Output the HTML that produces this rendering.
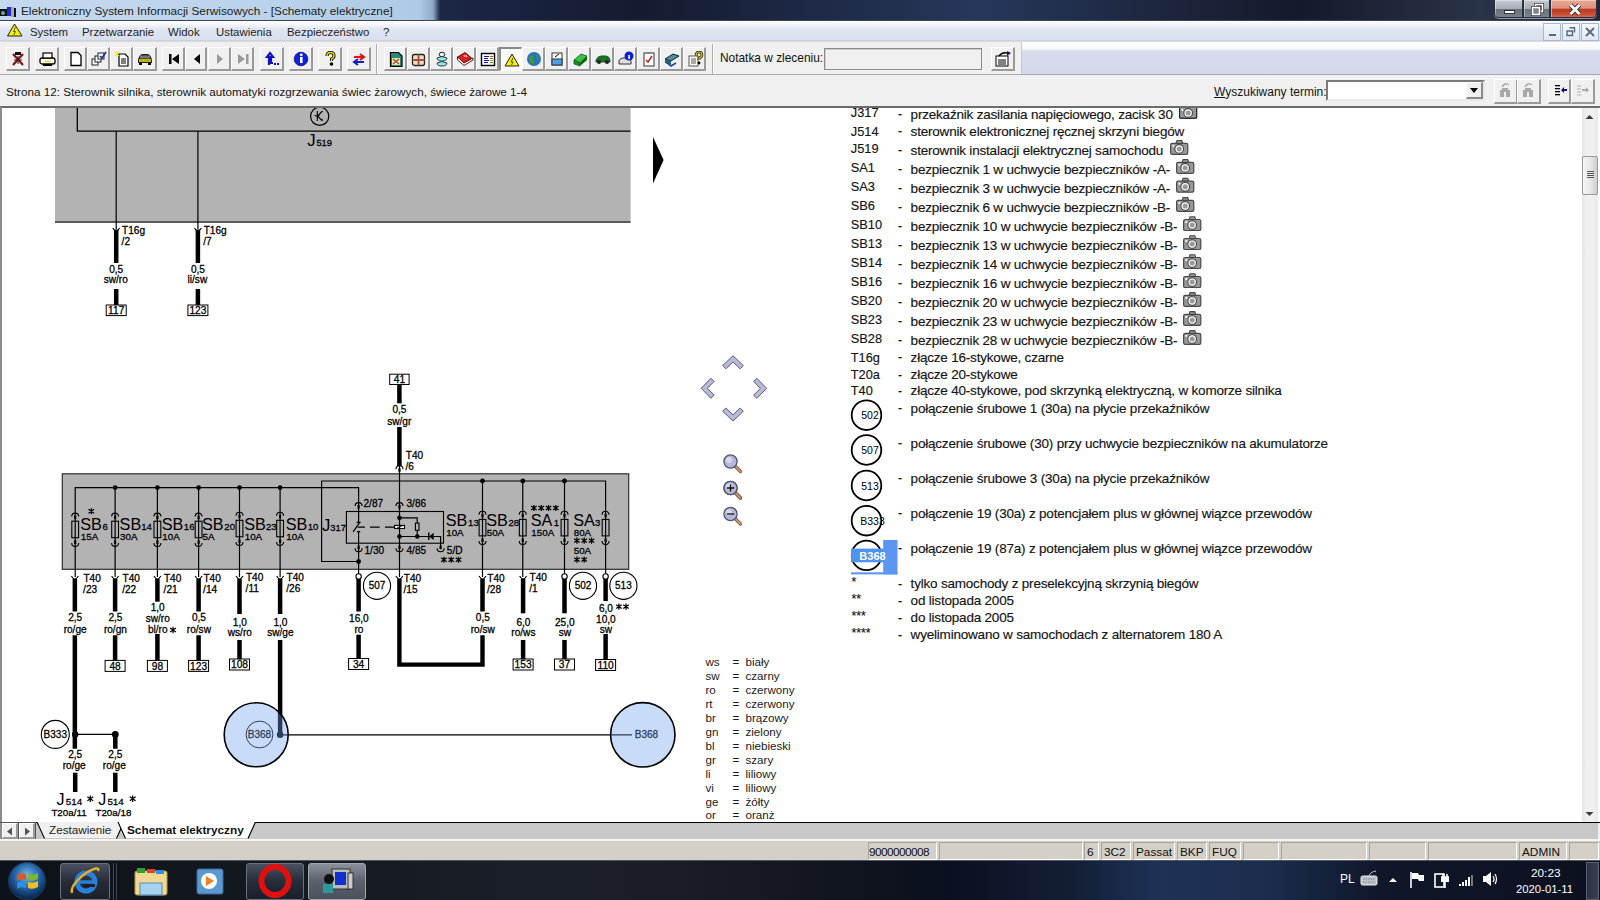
<!DOCTYPE html>
<html><head><meta charset="utf-8">
<style>
*{margin:0;padding:0;box-sizing:border-box}
html,body{width:1600px;height:900px;overflow:hidden;background:#f0f0f0;font-family:"Liberation Sans",sans-serif;font-size:12px;color:#000;position:relative}
.a{position:absolute}
#title{left:0;top:0;width:1600px;height:21px;background:linear-gradient(90deg,#c4d9ee 0,#bcd3ec 250px,#aecae6 420px,#8fa9c8 433px,#1c2746 440px,#141b31 640px,#27375a 980px,#1d2740 1150px,#131a2b 1300px,#2a3448 1480px,#1f2738 1600px);border-bottom:1px solid #3e4450}
#title .t{position:absolute;left:21px;top:4px;font-size:11.8px;color:#1c1c1c}
#menu{left:0;top:21px;width:1600px;height:21px;background:linear-gradient(#fdfdfe 0,#f3f5fa 4px,#dfe5f1 8px,#d8dfee 19px,#c0c5d0 20px,#f0f0f0 21px)}
#menu span{position:absolute;top:4.5px;font-size:11.4px;color:#1e1e1e}
.mdi{position:absolute;top:2px;width:18px;height:18px;border:1px solid #a9b8cc;background:linear-gradient(#f4f8fc,#dde8f3)}
#tb{left:0;top:42px;width:1600px;height:33px;background:#f0f0f0;border-bottom:1px solid #a9a9a9}
#tbr{left:1021px;top:42px;width:579px;height:32px;background:linear-gradient(#fefefe 0,#f6f7fb 7px,#d6dcec 9px,#d3d9ea 31px);border-left:1px solid #c8c8c8}
.btn{position:absolute;top:5px;height:24px;background:#f0f0f0;border-style:solid;border-width:1px 2px 2px 1px;border-color:#fff #9a9a9a #9a9a9a #fff}
.btn svg{position:absolute;left:0;top:0}
.sep{position:absolute;top:2px;width:2px;height:30px;border-left:1px solid #b0b0b0;border-right:1px solid #fff}
#info{left:0;top:75px;width:1600px;height:32px;background:#f0f0f0}
#info .t{position:absolute;left:6px;top:10px;font-size:11.7px;color:#141414}
#content{left:0;top:106px;width:1600px;height:717px;background:#fff;border-top:2px solid #6c6c6c;border-left:2px solid #8c8c8c;overflow:hidden}
#svgwrap{position:absolute;left:0;top:0;width:1600px;height:900px}
.lg{position:absolute;left:0;height:16px;white-space:nowrap;color:#1a1a1a}
.lg .c1{position:absolute;left:850.8px;font-size:12.4px;top:1px}
.lg .c1.st{font-size:11px;top:-2px}
.lg .c2{position:absolute;left:898px;font-size:12px;top:1px}
.lg .c3{position:absolute;left:910.5px;font-size:13px;top:0}
.cl span{position:absolute;font-size:11.6px;color:#1a1a1a;white-space:nowrap}
.cl{position:absolute;left:0}
#scroll{left:1582px;top:108px;width:16px;height:714px;background:linear-gradient(90deg,#e6e6e6,#f0f0f0 30%,#f0f0f0 70%,#e8e8e8)}
#tabs{left:0;top:822px;width:1600px;height:17px;background:#c8c8c8;border-top:1px solid #000}
#status{left:0;top:839px;width:1600px;height:21px;background:#d4d0c8;border-top:2px solid #f6f5f2}
.sp{position:absolute;top:1px;height:18px;border:1px solid;border-color:#a8a49c #fff #fff #a8a49c;font-size:11.8px;padding:1.5px 0 0 2px;color:#111;white-space:nowrap}
#task{left:0;top:860px;width:1600px;height:40px;background:linear-gradient(90deg,#0d1119 0,#151920 300px,#1b1f27 560px,#191c24 700px,#10141d 850px,#0b1020 950px,#142038 1080px,#1f3256 1160px,#1c2c4c 1270px,#0f172a 1380px,#0c111f 1600px);border-top:1px solid #4e5664}
.tbtn{position:absolute;top:2px;height:37px;border:1px solid #6a7282;border-radius:3px;background:linear-gradient(#4a5060,#262c38 50%,#1a1f2a)}
.tray{position:absolute;color:#fff;font-size:12px}
</style></head><body>
<div id="title" class="a">
 <svg class="a" style="left:0;top:5px" width="18" height="13"><rect x="0" y="4" width="7" height="7" fill="#111"/><circle cx="3" cy="8" r="2" fill="#6a8"/><rect x="7" y="2" width="4" height="9" fill="#1a2ad0"/><rect x="11" y="2" width="3" height="10" fill="#aaa"/><rect x="14" y="3" width="2" height="9" fill="#111"/></svg>
 <span class="t">Elektroniczny System Informacji Serwisowych - [Schematy elektryczne]</span>
 <div class="a" style="left:1494px;top:-1px;width:103px;height:19px;border:1px solid #2a2f3a;border-radius:0 0 5px 5px;overflow:hidden;box-shadow:0 1px 0 rgba(230,235,245,0.55)">
  <div class="a" style="left:0;top:0;width:28px;height:18px;background:linear-gradient(#c4c8d0,#a8adb6 48%,#6a717c 52%,#7d848e);border-right:1px solid #2c3240;box-shadow:inset 1px 1px 0 rgba(255,255,255,0.4)"></div>
  <div class="a" style="left:29px;top:0;width:26px;height:18px;background:linear-gradient(#c4c8d0,#a8adb6 48%,#6a717c 52%,#7d848e);border-right:1px solid #2c3240;box-shadow:inset 1px 1px 0 rgba(255,255,255,0.4)"></div>
  <div class="a" style="left:56px;top:0;width:47px;height:18px;background:linear-gradient(#eaa898,#e0907e 45%,#b83a22 52%,#c84a30 75%,#d87060);box-shadow:inset 1px 1px 0 rgba(255,220,210,0.6)"></div>
  <div class="a" style="left:9px;top:10px;width:11px;height:4px;background:#fff;border:1px solid #333"></div>
  <svg class="a" style="left:36px;top:3px" width="14" height="13"><rect x="4.5" y="1.5" width="7" height="7" fill="none" stroke="#333" stroke-width="3"/><rect x="4.5" y="1.5" width="7" height="7" fill="none" stroke="#fff" stroke-width="1.6"/><rect x="1.5" y="4.5" width="7" height="7" fill="#7c8390" stroke="#333" stroke-width="3"/><rect x="1.5" y="4.5" width="7" height="7" fill="#7c8390" stroke="#fff" stroke-width="1.6"/></svg>
  <svg class="a" style="left:72px;top:3px" width="16" height="13"><path d="M3.5 2 L12.5 11 M12.5 2 L3.5 11" stroke="#333" stroke-width="4.6"/><path d="M3.5 2 L12.5 11 M12.5 2 L3.5 11" stroke="#fff" stroke-width="2.8"/></svg>
 </div>
</div>
<div id="menu" class="a">
 <svg class="a" style="left:7px;top:2px" width="16" height="14"><path d="M7.5 1 L15 13 H0.5 Z" fill="#f5f000" stroke="#222" stroke-width="1"/><path d="M8.5 4 L6.5 8.5 H8.5 L6.8 12" stroke="#4a4a20" stroke-width="0.9" fill="none"/></svg>
 <span style="left:30px">System</span><span style="left:82px">Przetwarzanie</span><span style="left:168px">Widok</span><span style="left:216px">Ustawienia</span><span style="left:287px">Bezpieczeństwo</span><span style="left:383px">?</span>
 <div class="mdi" style="left:1543px"><div class="a" style="left:5px;top:10px;width:7px;height:2px;background:#5a6878"></div></div>
 <div class="mdi" style="left:1562px"><svg class="a" style="left:3px;top:3px" width="10" height="10"><path d="M3.5 0.8 H8.5 V5.5 M1 4 H6.5 V8.5 H1 Z" stroke="#5a6878" stroke-width="1.4" fill="none"/></svg></div>
 <div class="mdi" style="left:1581px"><svg class="a" style="left:3px;top:3px" width="11" height="11"><path d="M1 1 L9 9 M9 1 L1 9" stroke="#5a6878" stroke-width="1.8"/></svg></div>
</div>
<div id="tb" class="a"><div class="btn" style="left:6px;width:24px"><svg width="20" height="20" style="left:3px;top:3px"><path d="M3 3 L13 14 M13 3 L3 14" stroke="#8a1010" stroke-width="2.2"/><path d="M5 1 h6 v3 h-6z" fill="#111"/><path d="M4 9 h8 M8 5 v8" stroke="#222" stroke-width="1"/></svg></div>
<div class="btn" style="left:35px;width:24px"><svg width="20" height="20" style="left:3px;top:3px"><rect x="1" y="7" width="15" height="6" rx="2" fill="#fff" stroke="#000" stroke-width="1.3"/><rect x="4" y="2" width="9" height="5" fill="#fff" stroke="#000" stroke-width="1.2"/><rect x="4" y="13" width="9" height="2" fill="#000"/><rect x="6" y="10" width="4" height="1" fill="#cc0"/></svg></div>
<div class="btn" style="left:64px;width:23px"><svg width="20" height="20" style="left:3px;top:3px"><path d="M3 1.5 H10 L13 4.5 V14.5 H3 Z" fill="#fff" stroke="#000" stroke-width="1.3"/></svg></div>
<div class="btn" style="left:87px;width:23px"><svg width="20" height="20" style="left:3px;top:3px"><rect x="1" y="8" width="6" height="6" fill="#fff" stroke="#222"/><rect x="4" y="5" width="6" height="6" fill="#fff" stroke="#222"/><rect x="7" y="2" width="6" height="6" fill="#fff" stroke="#222"/><path d="M9 5 L11 7 L15 1" stroke="#1a2a9a" stroke-width="1.6" fill="none"/></svg></div>
<div class="btn" style="left:110px;width:23px"><svg width="20" height="20" style="left:3px;top:3px"><path d="M5 3 H11 L14 6 V15 H5 Z" fill="#fff" stroke="#000" stroke-width="1.2"/><path d="M7 8 H12 M7 10 H12 M7 12 H12" stroke="#000"/><path d="M1 1 L5 5 M5 1 L1 5 M3 0 V6" stroke="#ee0" stroke-width="1"/></svg></div>
<div class="btn" style="left:133px;width:24px"><svg width="20" height="20" style="left:3px;top:3px"><path d="M1 9 Q2 4 5 3 H11 Q14 4 15 9 V12 H1 Z" fill="#222"/><rect x="2" y="8" width="12" height="3" fill="#b8b400"/><rect x="3" y="4.5" width="10" height="3" fill="#777"/><rect x="2" y="12" width="3" height="2" fill="#000"/><rect x="11" y="12" width="3" height="2" fill="#000"/></svg></div>
<div class="btn" style="left:162px;width:23px"><svg width="20" height="20" style="left:3px;top:3px"><rect x="3" y="3" width="2.5" height="10" fill="#000"/><path d="M13 3 V13 L6 8 Z" fill="#000"/></svg></div>
<div class="btn" style="left:185px;width:22px"><svg width="20" height="20" style="left:3px;top:3px"><path d="M11 3 V13 L5 8 Z" fill="#000"/></svg></div>
<div class="btn" style="left:208px;width:23px"><svg width="20" height="20" style="left:3px;top:3px"><path d="M5 3 V13 L11 8 Z" fill="#9a9a9a"/></svg></div>
<div class="btn" style="left:231px;width:23px"><svg width="20" height="20" style="left:3px;top:3px"><path d="M3 3 V13 L10 8 Z" fill="#9a9a9a"/><rect x="11" y="3" width="2.5" height="10" fill="#9a9a9a"/></svg></div>
<div class="btn" style="left:260px;width:24px"><svg width="20" height="20" style="left:3px;top:3px"><path d="M5 14 V6 H3 L6 2 L9 6 H7 V12 H9" fill="none" stroke="#1010c0" stroke-width="2.2"/><rect x="10" y="12" width="2" height="2" fill="#1010c0"/><rect x="13" y="12" width="2" height="2" fill="#1010c0"/></svg></div>
<div class="btn" style="left:289px;width:24px"><svg width="20" height="20" style="left:3px;top:3px"><circle cx="8" cy="8" r="6.8" fill="#1020d8" stroke="#0a0a80" stroke-width="0.8"/><rect x="7" y="6" width="2.6" height="6" fill="#fff"/><circle cx="8.3" cy="3.8" r="1.4" fill="#fff"/></svg></div>
<div class="btn" style="left:318px;width:24px"><svg width="20" height="20" style="left:3px;top:3px"><path d="M5 5 Q5 1.5 8.5 1.5 Q12 1.5 12 5 Q12 7 9.5 8 V10" fill="none" stroke="#000" stroke-width="3"/><path d="M5 5 Q5 1.5 8.5 1.5 Q12 1.5 12 5 Q12 7 9.5 8 V10" fill="none" stroke="#f0e000" stroke-width="1.4"/><circle cx="9.5" cy="13" r="1.8" fill="#000"/></svg></div>
<div class="btn" style="left:347px;width:24px"><svg width="20" height="20" style="left:3px;top:3px"><path d="M3 6 H12 M9 3 L13 6 L9 9" stroke="#e01010" stroke-width="2" fill="none"/><path d="M13 11 H4 M7 8 L3 11 L7 14" stroke="#1020c0" stroke-width="2" fill="none"/></svg></div>
<div class="sep" style="left:376px"></div>
<div class="btn" style="left:384px;width:23px"><svg width="20" height="20" style="left:3px;top:3px"><path d="M2.5 1.5 H10.5 L14 5 V15.5 H2.5 Z" fill="#2a8a7a" stroke="#000" stroke-width="1.2"/><rect x="4" y="7" width="8" height="7" fill="#f0f080"/><path d="M5 8 L11 13 M11 8 L5 13" stroke="#a04a7a" stroke-width="1.5"/></svg></div>
<div class="btn" style="left:407px;width:23px"><svg width="20" height="20" style="left:3px;top:3px"><rect x="1.5" y="3.5" width="12" height="11" rx="2" fill="#f0e890" stroke="#222" stroke-width="1.3"/><path d="M7.5 3.5 V14.5 M1.5 9 H13.5" stroke="#a04a7a" stroke-width="1.8"/></svg></div>
<div class="btn" style="left:430px;width:23px"><svg width="20" height="20" style="left:3px;top:3px"><ellipse cx="8" cy="3.5" rx="2.8" ry="2.3" fill="#eee" stroke="#222"/><path d="M3 7 Q8 4 13 7 Q13 10 8 10 Q3 10 3 7Z" fill="#8de8f0" stroke="#222" stroke-width="0.9"/><path d="M3 12 Q8 9 13 12 Q13 15 8 15 Q3 15 3 12Z" fill="#8de8f0" stroke="#222" stroke-width="0.9"/></svg></div>
<div class="btn" style="left:453px;width:23px"><svg width="20" height="20" style="left:3px;top:3px"><path d="M0.5 6 L8 1.5 L14.5 7 L7 12 Z" fill="#e02020" stroke="#500" stroke-width="0.9"/><path d="M0.5 6 V9 L7 14.5 L16 9 V7 L7 12 Z" fill="#fff" stroke="#500" stroke-width="0.9"/><path d="M7 4 L8 6 M9 4 L10 6" stroke="#fff" stroke-width="0.9"/></svg></div>
<div class="btn" style="left:476px;width:23px"><svg width="20" height="20" style="left:3px;top:3px"><rect x="1.5" y="2.5" width="13" height="12" fill="#fff" stroke="#000" stroke-width="1.4"/><path d="M4 5.5 H9 M4 7.5 H8 M4 9.5 H9 M4 11.5 H8" stroke="#1a1aa0" stroke-width="1"/><path d="M10 5.5 H13" stroke="#e04040"/><path d="M10 7.5 H13" stroke="#40a040"/><path d="M10 9.5 H13" stroke="#c0a020"/><path d="M10 11.5 H13" stroke="#40a040"/></svg></div>
<div class="btn" style="left:499px;width:23px;background:#fafafa;border-width:2px 1px 1px 2px;border-color:#8a8a8a #fff #fff #8a8a8a"><svg width="20" height="20" style="left:3px;top:3px"><path d="M8 2 L15 14 H1 Z" fill="#f5f000" stroke="#222" stroke-width="1"/><path d="M9 6 L7 10 H9 L7.5 13" stroke="#333" stroke-width="0.9" fill="none"/></svg></div>
<div class="btn" style="left:522px;width:23px"><svg width="20" height="20" style="left:3px;top:3px"><circle cx="8" cy="8" r="7" fill="#2a70c0"/><path d="M4 5 Q7 3 8 6 Q6 9 9 11 L7 14 Q3 12 3 8Z" fill="#3a9a40"/><path d="M10 3 Q13 5 13 8 L11 9Z" fill="#3a9a40"/></svg></div>
<div class="btn" style="left:545px;width:23px"><svg width="20" height="20" style="left:3px;top:3px"><rect x="3" y="2" width="10" height="12" fill="#fff" stroke="#333"/><rect x="3" y="8" width="10" height="6" fill="#4aa0e8" stroke="#333"/><path d="M6 6 L10 3" stroke="#000"/></svg></div>
<div class="btn" style="left:568px;width:23px"><svg width="20" height="20" style="left:3px;top:3px"><path d="M2 9 L9 3 L15 5 L8 12 Z" fill="#40c040" stroke="#063" stroke-width="0.8"/><path d="M2 9 V13 L8 15 V12 Z" fill="#208a20" stroke="#063" stroke-width="0.8"/><path d="M8 12 V15 L15 9 V5Z" fill="#106010"/></svg></div>
<div class="btn" style="left:591px;width:23px"><svg width="20" height="20" style="left:3px;top:3px"><path d="M1 9 Q3 5 6 5 H11 Q14 5 15 9 V11 H1 Z" fill="#207020" stroke="#063"/><circle cx="4" cy="11" r="2" fill="#222"/><circle cx="12" cy="11" r="2" fill="#222"/></svg></div>
<div class="btn" style="left:614px;width:23px"><svg width="20" height="20" style="left:3px;top:3px"><path d="M1 10 Q2 7 5 7 H9 Q12 7 13 10 V13 H1 Z" fill="#ddd" stroke="#333"/><circle cx="11" cy="5" r="4.5" fill="#1020d0"/><rect x="10.3" y="4" width="1.6" height="4" fill="#fff"/></svg></div>
<div class="btn" style="left:637px;width:23px"><svg width="20" height="20" style="left:3px;top:3px"><rect x="3" y="2" width="10" height="13" fill="#fff" stroke="#333"/><rect x="6" y="1" width="4" height="2" fill="#888"/><path d="M5 9 L7 11 L11 5" stroke="#c02020" stroke-width="1.5" fill="none"/></svg></div>
<div class="btn" style="left:660px;width:23px"><svg width="20" height="20" style="left:3px;top:3px"><path d="M1 8 L9 3 L15 5 L7 10 Z" fill="#4a90a0" stroke="#123"/><path d="M1 8 V12 L7 14 V10Z" fill="#2a6070"/><path d="M3 12 L7 15 L12 12" stroke="#2040a0" stroke-width="1.5" fill="none"/></svg></div>
<div class="btn" style="left:683px;width:23px"><svg width="20" height="20" style="left:3px;top:3px"><rect x="2" y="5" width="9" height="10" fill="#fff" stroke="#555"/><path d="M4 8 H9 M4 10 H9 M4 12 H9" stroke="#555"/><path d="M9 5 Q9 1 12 1 Q15 1 15 4 Q15 6 12 7 V9" fill="none" stroke="#000" stroke-width="2.6"/><path d="M9 5 Q9 1 12 1 Q15 1 15 4 Q15 6 12 7 V9" fill="none" stroke="#f0e000" stroke-width="1.2"/><circle cx="12" cy="12" r="1.4" fill="#000"/></svg></div>
<div class="sep" style="left:712px"></div>
<span class="a" style="left:720px;top:9px;font-size:11.9px;color:#111">Notatka w zleceniu:</span>
<div class="a" style="left:824px;top:6px;width:158px;height:22px;background:#f0f0f0;border:1px solid #8a8a8a;box-shadow:inset 1px 1px 0 #cfcfcf"></div>
<div class="btn" style="left:991px;width:24px;top:5px"><svg width="20" height="20" style="left:2px;top:2px"><rect x="2" y="6" width="12" height="10" fill="#fff" stroke="#000"/><path d="M4 10 H12 M4 12 H12 M4 14 H12" stroke="#000"/><path d="M5 6 Q8 2 13 3" stroke="#000" stroke-width="1.5" fill="none"/><path d="M13 1 L17 3 L13 6 Z" fill="#10107a"/></svg></div></div>
<div id="tbr" class="a"></div>
<div id="info" class="a">
 <span class="t">Strona 12: Sterownik silnika, sterownik automatyki rozgrzewania świec żarowych, świece żarowe 1-4</span>
 <span class="a" style="left:1214px;top:9.5px;font-size:12px;color:#141414"><u>W</u>yszukiwany termin:</span>
 <div class="a" style="left:1326px;top:4.5px;width:159px;height:21px;background:#fff;border:2px solid;border-color:#7a7a7a #e8e8e8 #e8e8e8 #7a7a7a">
  <div class="a" style="right:0;top:0;width:17px;height:17px;background:#f0f0f0;border-style:solid;border-width:1px 2px 2px 1px;border-color:#fff #8a8a8a #8a8a8a #fff"><svg class="a" style="left:3px;top:5px" width="9" height="6"><path d="M0 0 H8 L4 5 Z" fill="#000"/></svg></div>
 </div>
 <div class="btn" style="left:1494px;top:4px;width:24px;height:25px"><svg width="20" height="20" style="left:2px;top:2px"><rect x="3" y="8" width="4" height="7" fill="#a8a8a8"/><rect x="9" y="8" width="4" height="7" fill="#a8a8a8"/><rect x="5" y="6" width="6" height="4" fill="#a8a8a8"/><path d="M5 5 Q8 0 12 3" stroke="#a8a8a8" stroke-width="1.4" fill="none"/></svg></div>
<div class="btn" style="left:1517px;top:4px;width:24px;height:25px"><svg width="20" height="20" style="left:2px;top:2px"><rect x="3" y="8" width="4" height="7" fill="#a8a8a8"/><rect x="9" y="8" width="4" height="7" fill="#a8a8a8"/><rect x="5" y="6" width="6" height="4" fill="#a8a8a8"/><path d="M5 5 Q8 0 12 3" stroke="#a8a8a8" stroke-width="1.4" fill="none"/></svg></div>
<div class="btn" style="left:1548px;top:4px;width:23px;height:25px"><svg width="20" height="20" style="left:2px;top:2px"><rect x="4" y="3" width="5" height="1.3" fill="#000"/><rect x="4" y="6" width="5" height="1.3" fill="#000"/><rect x="4" y="9" width="5" height="1.3" fill="#000"/><rect x="4" y="12" width="5" height="1.3" fill="#000"/><path d="M10 8 L13 5 V7 H16 V9 H13 V11 Z" fill="#0a0a8a"/></svg></div>
<div class="btn" style="left:1571px;top:4px;width:24px;height:25px"><svg width="20" height="20" style="left:2px;top:2px"><path d="M3 4 H7 M3 7 H7 M3 10 H7 M3 13 H7" stroke="#b0b0b0"/><path d="M15 8 L12 5 V7 H8 V9 H12 V11 Z" fill="#a8a8a8"/></svg></div>
</div>
<div id="content" class="a"></div>
<svg class="a" style="left:0;top:0;clip-path:inset(108px 18px 78px 1px);font-family:'Liberation Sans',sans-serif" width="1600" height="900">
<rect x="55" y="107" width="575.6" height="114.5" fill="#b3b3b3"/>
<line x1="55" y1="222" x2="630.6" y2="222" stroke="#5a5a5a" stroke-width="2"/>
<path d="M77.3 107 V131.2 H630.6" fill="none" stroke="#000" stroke-width="1.3"/>
<line x1="116.2" y1="131.2" x2="116.2" y2="229" stroke="#000" stroke-width="1.2"/>
<line x1="197.9" y1="131.2" x2="197.9" y2="229" stroke="#000" stroke-width="1.2"/>
<circle cx="319.7" cy="116.3" r="9.1" fill="none" stroke="#000" stroke-width="1.2"/>
<path d="M314.5 115.8 H319.5 M317.3 111 V121 M317.3 116.3 L322.5 111 M317.3 116 L321.8 120.2" fill="none" stroke="#000" stroke-width="1.1"/>
<path d="M323.2 121 L320.6 120.3 L322.2 118.6 Z" fill="#000"/>
<text x="307.2" y="146.2" font-size="16.8" text-anchor="start" fill="#000" stroke="#000" stroke-width="0.05" font-weight="normal">J</text>
<text x="316.4" y="146.3" font-size="9.4" text-anchor="start" fill="#000" stroke="#000" stroke-width="0.28" font-weight="normal">519</text>
<path d="M653 137 L663.6 160 L653 183.5 Z" fill="#000"/>
<path d="M112.7 228 Q116.2 234 119.7 228" fill="none" stroke="#000" stroke-width="1.1"/>
<rect x="113.95" y="229.5" width="4.5" height="33.5" fill="#000"/>
<text x="122" y="234.3" font-size="10.1" text-anchor="start" fill="#000" stroke="#000" stroke-width="0.28" font-weight="normal">T16g</text>
<text x="121.6" y="245" font-size="10.1" text-anchor="start" fill="#000" stroke="#000" stroke-width="0.28" font-weight="normal">/2</text>
<text x="116.2" y="272.8" font-size="10.1" text-anchor="middle" fill="#000" stroke="#000" stroke-width="0.28" font-weight="normal">0,5</text>
<text x="115.7" y="282.8" font-size="10.1" text-anchor="middle" fill="#000" stroke="#000" stroke-width="0.28" font-weight="normal">sw/ro</text>
<rect x="113.95" y="289" width="4.5" height="16.5" fill="#000"/>
<rect x="106.2" y="305" width="20" height="10.6" fill="#fff" stroke="#000" stroke-width="1"/>
<text x="116.2" y="313.9" font-size="10.2" text-anchor="middle" fill="#000" stroke="#000" stroke-width="0.28" font-weight="normal">117</text>
<path d="M194.4 228 Q197.9 234 201.4 228" fill="none" stroke="#000" stroke-width="1.1"/>
<rect x="195.65" y="229.5" width="4.5" height="33.5" fill="#000"/>
<text x="203.7" y="234.3" font-size="10.1" text-anchor="start" fill="#000" stroke="#000" stroke-width="0.28" font-weight="normal">T16g</text>
<text x="203.3" y="245" font-size="10.1" text-anchor="start" fill="#000" stroke="#000" stroke-width="0.28" font-weight="normal">/7</text>
<text x="197.9" y="272.8" font-size="10.1" text-anchor="middle" fill="#000" stroke="#000" stroke-width="0.28" font-weight="normal">0,5</text>
<text x="197.4" y="282.8" font-size="10.1" text-anchor="middle" fill="#000" stroke="#000" stroke-width="0.28" font-weight="normal">li/sw</text>
<rect x="195.65" y="289" width="4.5" height="16.5" fill="#000"/>
<rect x="187.9" y="305" width="20" height="10.6" fill="#fff" stroke="#000" stroke-width="1"/>
<text x="197.9" y="313.9" font-size="10.2" text-anchor="middle" fill="#000" stroke="#000" stroke-width="0.28" font-weight="normal">123</text>
<rect x="62.3" y="473.8" width="566.4" height="95.5" fill="#b3b3b3" stroke="#2e2e2e" stroke-width="1.2"/>
<path d="M75.2 577 V487.6 H358.6 V522" fill="none" stroke="#000" stroke-width="1.2"/>
<path d="M358.6 561.5 H321.6 V481 H605.6 V577" fill="none" stroke="#000" stroke-width="1.2"/>
<line x1="115.1" y1="487.6" x2="115.1" y2="577" stroke="#000" stroke-width="1.2"/>
<circle cx="115.1" cy="487.6" r="2.4" fill="#000"/>
<line x1="157.4" y1="487.6" x2="157.4" y2="577" stroke="#000" stroke-width="1.2"/>
<circle cx="157.4" cy="487.6" r="2.4" fill="#000"/>
<line x1="198.6" y1="487.6" x2="198.6" y2="577" stroke="#000" stroke-width="1.2"/>
<circle cx="198.6" cy="487.6" r="2.4" fill="#000"/>
<line x1="239.5" y1="487.6" x2="239.5" y2="577" stroke="#000" stroke-width="1.2"/>
<circle cx="239.5" cy="487.6" r="2.4" fill="#000"/>
<line x1="280.1" y1="487.6" x2="280.1" y2="577" stroke="#000" stroke-width="1.2"/>
<circle cx="280.1" cy="487.6" r="2.4" fill="#000"/>
<line x1="482.5" y1="481" x2="482.5" y2="577" stroke="#000" stroke-width="1.2"/>
<circle cx="482.5" cy="481" r="2.4" fill="#000"/>
<line x1="522.75" y1="481" x2="522.75" y2="577" stroke="#000" stroke-width="1.2"/>
<circle cx="522.75" cy="481" r="2.4" fill="#000"/>
<line x1="564.5" y1="481" x2="564.5" y2="577" stroke="#000" stroke-width="1.2"/>
<circle cx="564.5" cy="481" r="2.4" fill="#000"/>
<rect x="71.8" y="521.2" width="6.8" height="16.5" fill="none" stroke="#000" stroke-width="1.1"/>
<path d="M71.7 516.6 A3.5 3.5 0 0 1 78.7 516.6" fill="none" stroke="#000" stroke-width="1.1"/>
<rect x="74.1" y="515.6" width="2.2" height="3.5" fill="#000"/>
<path d="M71.7 542.9 A3.5 3.5 0 0 0 78.7 542.9" fill="none" stroke="#000" stroke-width="1.1"/>
<rect x="74.1" y="540.4" width="2.2" height="3.5" fill="#000"/>
<text x="80.3" y="529.8" font-size="16.2" text-anchor="start" fill="#000" stroke="#000" stroke-width="0.05" font-weight="normal">SB</text>
<text x="102.6" y="529.8" font-size="9.6" text-anchor="start" fill="#000" stroke="#000" stroke-width="0.28" font-weight="normal">6</text>
<text x="80.8" y="539.8" font-size="9.8" text-anchor="start" fill="#000" stroke="#000" stroke-width="0.28" font-weight="normal">15A</text>
<rect x="111.7" y="521.2" width="6.8" height="16.5" fill="none" stroke="#000" stroke-width="1.1"/>
<path d="M111.6 516.6 A3.5 3.5 0 0 1 118.6 516.6" fill="none" stroke="#000" stroke-width="1.1"/>
<rect x="114" y="515.6" width="2.2" height="3.5" fill="#000"/>
<path d="M111.6 542.9 A3.5 3.5 0 0 0 118.6 542.9" fill="none" stroke="#000" stroke-width="1.1"/>
<rect x="114" y="540.4" width="2.2" height="3.5" fill="#000"/>
<text x="119.6" y="529.8" font-size="16.2" text-anchor="start" fill="#000" stroke="#000" stroke-width="0.05" font-weight="normal">SB</text>
<text x="141.2" y="529.8" font-size="9.6" text-anchor="start" fill="#000" stroke="#000" stroke-width="0.28" font-weight="normal">14</text>
<text x="120.1" y="539.8" font-size="9.8" text-anchor="start" fill="#000" stroke="#000" stroke-width="0.28" font-weight="normal">30A</text>
<rect x="154" y="521.2" width="6.8" height="16.5" fill="none" stroke="#000" stroke-width="1.1"/>
<path d="M153.9 516.6 A3.5 3.5 0 0 1 160.9 516.6" fill="none" stroke="#000" stroke-width="1.1"/>
<rect x="156.3" y="515.6" width="2.2" height="3.5" fill="#000"/>
<path d="M153.9 542.9 A3.5 3.5 0 0 0 160.9 542.9" fill="none" stroke="#000" stroke-width="1.1"/>
<rect x="156.3" y="540.4" width="2.2" height="3.5" fill="#000"/>
<text x="161.8" y="529.8" font-size="16.2" text-anchor="start" fill="#000" stroke="#000" stroke-width="0.05" font-weight="normal">SB</text>
<text x="183.8" y="529.8" font-size="9.6" text-anchor="start" fill="#000" stroke="#000" stroke-width="0.28" font-weight="normal">16</text>
<text x="162.3" y="539.8" font-size="9.8" text-anchor="start" fill="#000" stroke="#000" stroke-width="0.28" font-weight="normal">10A</text>
<rect x="195.2" y="521.2" width="6.8" height="16.5" fill="none" stroke="#000" stroke-width="1.1"/>
<path d="M195.1 516.6 A3.5 3.5 0 0 1 202.1 516.6" fill="none" stroke="#000" stroke-width="1.1"/>
<rect x="197.5" y="515.6" width="2.2" height="3.5" fill="#000"/>
<path d="M195.1 542.9 A3.5 3.5 0 0 0 202.1 542.9" fill="none" stroke="#000" stroke-width="1.1"/>
<rect x="197.5" y="540.4" width="2.2" height="3.5" fill="#000"/>
<text x="202" y="529.8" font-size="16.2" text-anchor="start" fill="#000" stroke="#000" stroke-width="0.05" font-weight="normal">SB</text>
<text x="224.3" y="529.8" font-size="9.6" text-anchor="start" fill="#000" stroke="#000" stroke-width="0.28" font-weight="normal">20</text>
<text x="202.5" y="539.8" font-size="9.8" text-anchor="start" fill="#000" stroke="#000" stroke-width="0.28" font-weight="normal">5A</text>
<rect x="236.1" y="520.3" width="6.8" height="16.5" fill="none" stroke="#000" stroke-width="1.1"/>
<path d="M236 515.7 A3.5 3.5 0 0 1 243 515.7" fill="none" stroke="#000" stroke-width="1.1"/>
<rect x="238.4" y="514.7" width="2.2" height="3.5" fill="#000"/>
<path d="M236 542 A3.5 3.5 0 0 0 243 542" fill="none" stroke="#000" stroke-width="1.1"/>
<rect x="238.4" y="539.5" width="2.2" height="3.5" fill="#000"/>
<text x="244.2" y="529.8" font-size="16.2" text-anchor="start" fill="#000" stroke="#000" stroke-width="0.05" font-weight="normal">SB</text>
<text x="265.9" y="529.8" font-size="9.6" text-anchor="start" fill="#000" stroke="#000" stroke-width="0.28" font-weight="normal">23</text>
<text x="244.7" y="539.8" font-size="9.8" text-anchor="start" fill="#000" stroke="#000" stroke-width="0.28" font-weight="normal">10A</text>
<rect x="276.7" y="520.3" width="6.8" height="16.5" fill="none" stroke="#000" stroke-width="1.1"/>
<path d="M276.6 515.7 A3.5 3.5 0 0 1 283.6 515.7" fill="none" stroke="#000" stroke-width="1.1"/>
<rect x="279" y="514.7" width="2.2" height="3.5" fill="#000"/>
<path d="M276.6 542 A3.5 3.5 0 0 0 283.6 542" fill="none" stroke="#000" stroke-width="1.1"/>
<rect x="279" y="539.5" width="2.2" height="3.5" fill="#000"/>
<text x="285.8" y="529.8" font-size="16.2" text-anchor="start" fill="#000" stroke="#000" stroke-width="0.05" font-weight="normal">SB</text>
<text x="307.7" y="529.8" font-size="9.6" text-anchor="start" fill="#000" stroke="#000" stroke-width="0.28" font-weight="normal">10</text>
<text x="286.3" y="539.8" font-size="9.8" text-anchor="start" fill="#000" stroke="#000" stroke-width="0.28" font-weight="normal">10A</text>
<path d="M91.3 508.24 V514.36 M88.55 509.36 L94.05 513.24 M88.55 513.24 L94.05 509.36" stroke="#000" stroke-width="1.25" fill="none"/>
<text x="322" y="531.4" font-size="16.7" text-anchor="start" fill="#000" stroke="#000" stroke-width="0.05" font-weight="normal">J</text>
<text x="330.3" y="530.6" font-size="9.4" text-anchor="start" fill="#000" stroke="#000" stroke-width="0.28" font-weight="normal">317</text>
<rect x="479.1" y="519.4" width="6.8" height="16.5" fill="none" stroke="#000" stroke-width="1.1"/>
<path d="M479 514.8 A3.5 3.5 0 0 1 486 514.8" fill="none" stroke="#000" stroke-width="1.1"/>
<rect x="481.4" y="513.8" width="2.2" height="3.5" fill="#000"/>
<path d="M479 541.1 A3.5 3.5 0 0 0 486 541.1" fill="none" stroke="#000" stroke-width="1.1"/>
<rect x="481.4" y="538.6" width="2.2" height="3.5" fill="#000"/>
<text x="445.7" y="525.9" font-size="16.2" text-anchor="start" fill="#000" stroke="#000" stroke-width="0.05" font-weight="normal">SB</text>
<text x="468.1" y="525.9" font-size="9.6" text-anchor="start" fill="#000" stroke="#000" stroke-width="0.28" font-weight="normal">13</text>
<text x="446.2" y="535.9" font-size="9.8" text-anchor="start" fill="#000" stroke="#000" stroke-width="0.28" font-weight="normal">10A</text>
<rect x="519.35" y="519.4" width="6.8" height="16.5" fill="none" stroke="#000" stroke-width="1.1"/>
<path d="M519.25 514.8 A3.5 3.5 0 0 1 526.25 514.8" fill="none" stroke="#000" stroke-width="1.1"/>
<rect x="521.65" y="513.8" width="2.2" height="3.5" fill="#000"/>
<path d="M519.25 541.1 A3.5 3.5 0 0 0 526.25 541.1" fill="none" stroke="#000" stroke-width="1.1"/>
<rect x="521.65" y="538.6" width="2.2" height="3.5" fill="#000"/>
<text x="486.2" y="525.9" font-size="16.2" text-anchor="start" fill="#000" stroke="#000" stroke-width="0.05" font-weight="normal">SB</text>
<text x="508.5" y="525.9" font-size="9.6" text-anchor="start" fill="#000" stroke="#000" stroke-width="0.28" font-weight="normal">28</text>
<text x="486.7" y="535.9" font-size="9.8" text-anchor="start" fill="#000" stroke="#000" stroke-width="0.28" font-weight="normal">50A</text>
<rect x="561.1" y="519.4" width="6.8" height="16.5" fill="none" stroke="#000" stroke-width="1.1"/>
<path d="M561 514.8 A3.5 3.5 0 0 1 568 514.8" fill="none" stroke="#000" stroke-width="1.1"/>
<rect x="563.4" y="513.8" width="2.2" height="3.5" fill="#000"/>
<path d="M561 541.1 A3.5 3.5 0 0 0 568 541.1" fill="none" stroke="#000" stroke-width="1.1"/>
<rect x="563.4" y="538.6" width="2.2" height="3.5" fill="#000"/>
<text x="530.8" y="525.9" font-size="16.2" text-anchor="start" fill="#000" stroke="#000" stroke-width="0.05" font-weight="normal">SA</text>
<text x="553.8" y="525.9" font-size="9.6" text-anchor="start" fill="#000" stroke="#000" stroke-width="0.28" font-weight="normal">1</text>
<text x="531.3" y="535.9" font-size="9.8" text-anchor="start" fill="#000" stroke="#000" stroke-width="0.28" font-weight="normal">150A</text>
<rect x="602.2" y="519.4" width="6.8" height="16.5" fill="none" stroke="#000" stroke-width="1.1"/>
<path d="M602.1 514.8 A3.5 3.5 0 0 1 609.1 514.8" fill="none" stroke="#000" stroke-width="1.1"/>
<rect x="604.5" y="513.8" width="2.2" height="3.5" fill="#000"/>
<path d="M602.1 541.1 A3.5 3.5 0 0 0 609.1 541.1" fill="none" stroke="#000" stroke-width="1.1"/>
<rect x="604.5" y="538.6" width="2.2" height="3.5" fill="#000"/>
<text x="573.2" y="525.9" font-size="16.2" text-anchor="start" fill="#000" stroke="#000" stroke-width="0.05" font-weight="normal">SA</text>
<text x="594.9" y="525.9" font-size="9.6" text-anchor="start" fill="#000" stroke="#000" stroke-width="0.28" font-weight="normal">3</text>
<text x="573.7" y="535.9" font-size="9.8" text-anchor="start" fill="#000" stroke="#000" stroke-width="0.28" font-weight="normal">80A</text>
<path d="M533.9 504.94 V511.06 M531.15 506.06 L536.65 509.94 M531.15 509.94 L536.65 506.06" stroke="#000" stroke-width="1.25" fill="none"/>
<path d="M541.2 504.94 V511.06 M538.45 506.06 L543.95 509.94 M538.45 509.94 L543.95 506.06" stroke="#000" stroke-width="1.25" fill="none"/>
<path d="M548.5 504.94 V511.06 M545.75 506.06 L551.25 509.94 M545.75 509.94 L551.25 506.06" stroke="#000" stroke-width="1.25" fill="none"/>
<path d="M555.8 504.94 V511.06 M553.05 506.06 L558.55 509.94 M553.05 509.94 L558.55 506.06" stroke="#000" stroke-width="1.25" fill="none"/>
<path d="M576.9 537.54 V543.66 M574.15 538.66 L579.65 542.54 M574.15 542.54 L579.65 538.66" stroke="#000" stroke-width="1.25" fill="none"/>
<path d="M584.2 537.54 V543.66 M581.45 538.66 L586.95 542.54 M581.45 542.54 L586.95 538.66" stroke="#000" stroke-width="1.25" fill="none"/>
<path d="M591.5 537.54 V543.66 M588.75 538.66 L594.25 542.54 M588.75 542.54 L594.25 538.66" stroke="#000" stroke-width="1.25" fill="none"/>
<text x="573.7" y="554" font-size="9.8" text-anchor="start" fill="#000" stroke="#000" stroke-width="0.28" font-weight="normal">50A</text>
<path d="M576.9 556.54 V562.66 M574.15 557.66 L579.65 561.54 M574.15 561.54 L579.65 557.66" stroke="#000" stroke-width="1.25" fill="none"/>
<path d="M584.2 556.54 V562.66 M581.45 557.66 L586.95 561.54 M581.45 561.54 L586.95 557.66" stroke="#000" stroke-width="1.25" fill="none"/>
<rect x="346.4" y="511.5" width="97.1" height="31.7" fill="none" stroke="#000" stroke-width="1.1"/>
<line x1="358.6" y1="531" x2="358.6" y2="577" stroke="#000" stroke-width="1.2"/>
<path d="M355.1 506.1 A3.5 3.5 0 0 1 362.1 506.1" fill="none" stroke="#000" stroke-width="1.1"/>
<rect x="357.5" y="505.1" width="2.2" height="3.5" fill="#000"/>
<path d="M355.1 548.2 A3.5 3.5 0 0 0 362.1 548.2" fill="none" stroke="#000" stroke-width="1.1"/>
<rect x="357.5" y="545.7" width="2.2" height="3.5" fill="#000"/>
<text x="363.5" y="507.3" font-size="10.1" text-anchor="start" fill="#000" stroke="#000" stroke-width="0.28" font-weight="normal">2/87</text>
<text x="364.5" y="554.2" font-size="10.1" text-anchor="start" fill="#000" stroke="#000" stroke-width="0.28" font-weight="normal">1/30</text>
<path d="M353.1 531.9 L359.9 522.2 M356.6 522.4 H360.6 M357 531.6 H360.2" stroke="#000" stroke-width="1.2" fill="none"/>
<path d="M357.5 527.2 H365 M370 527.2 H379.7 M385 527.2 H394.4" stroke="#000" stroke-width="1.3" fill="none"/>
<rect x="394.6" y="525.4" width="9.9" height="3.1" fill="#fff" stroke="#000" stroke-width="1.1"/>
<path d="M397 528 L402 525.8" stroke="#000" stroke-width="0.9"/>
<line x1="399.5" y1="466" x2="399.5" y2="577" stroke="#000" stroke-width="1.2"/>
<path d="M396 469.3 A3.5 3.5 0 0 1 403 469.3" fill="none" stroke="#000" stroke-width="1.1"/>
<rect x="398.4" y="468.3" width="2.2" height="3.5" fill="#000"/>
<path d="M396 506.1 A3.5 3.5 0 0 1 403 506.1" fill="none" stroke="#000" stroke-width="1.1"/>
<rect x="398.4" y="505.1" width="2.2" height="3.5" fill="#000"/>
<path d="M396 548.2 A3.5 3.5 0 0 0 403 548.2" fill="none" stroke="#000" stroke-width="1.1"/>
<rect x="398.4" y="545.7" width="2.2" height="3.5" fill="#000"/>
<text x="406.5" y="507.3" font-size="10.1" text-anchor="start" fill="#000" stroke="#000" stroke-width="0.28" font-weight="normal">3/86</text>
<text x="406.5" y="554.2" font-size="10.1" text-anchor="start" fill="#000" stroke="#000" stroke-width="0.28" font-weight="normal">4/85</text>
<circle cx="399.5" cy="517.8" r="2.3" fill="#000"/>
<circle cx="399.5" cy="536.5" r="2.3" fill="#000"/>
<path d="M399.5 517.8 H417.2 V523.1 M417.2 530.3 V536.5 M399.5 536.5 H440.6 V546" fill="none" stroke="#000" stroke-width="1.2"/>
<rect x="415.4" y="523.1" width="3.6" height="7.2" fill="none" stroke="#000" stroke-width="1.1"/>
<circle cx="417.3" cy="536.5" r="2.3" fill="#000"/>
<path d="M428.8 532.6 V540" stroke="#000" stroke-width="1.4"/><path d="M429.2 536.4 L433.6 532.8 V540 Z" fill="#000"/>
<path d="M437.1 548.2 A3.5 3.5 0 0 0 444.1 548.2" fill="none" stroke="#000" stroke-width="1.1"/>
<rect x="439.5" y="545.7" width="2.2" height="3.5" fill="#000"/>
<text x="446.8" y="554.2" font-size="10.1" text-anchor="start" fill="#000" stroke="#000" stroke-width="0.28" font-weight="normal">5/D</text>
<path d="M443.9 556.74 V562.86 M441.15 557.86 L446.65 561.74 M441.15 561.74 L446.65 557.86" stroke="#000" stroke-width="1.25" fill="none"/>
<path d="M451.2 556.74 V562.86 M448.45 557.86 L453.95 561.74 M448.45 561.74 L453.95 557.86" stroke="#000" stroke-width="1.25" fill="none"/>
<path d="M458.5 556.74 V562.86 M455.75 557.86 L461.25 561.74 M455.75 561.74 L461.25 557.86" stroke="#000" stroke-width="1.25" fill="none"/>
<circle cx="358.6" cy="561.5" r="2.4" fill="#000"/>
<rect x="389.7" y="374.2" width="19.4" height="10.3" fill="#fff" stroke="#000" stroke-width="1"/>
<text x="399.4" y="382.8" font-size="10.2" text-anchor="middle" fill="#000" stroke="#000" stroke-width="0.28" font-weight="normal">41</text>
<rect x="397.15" y="384.5" width="4.5" height="18.8" fill="#000"/>
<text x="399.4" y="412.9" font-size="10.1" text-anchor="middle" fill="#000" stroke="#000" stroke-width="0.28" font-weight="normal">0,5</text>
<text x="399.2" y="425" font-size="10.1" text-anchor="middle" fill="#000" stroke="#000" stroke-width="0.28" font-weight="normal">sw/gr</text>
<rect x="397.15" y="427" width="4.5" height="39" fill="#000"/>
<text x="405.8" y="459" font-size="10.1" text-anchor="start" fill="#000" stroke="#000" stroke-width="0.28" font-weight="normal">T40</text>
<text x="405.4" y="470" font-size="10.1" text-anchor="start" fill="#000" stroke="#000" stroke-width="0.28" font-weight="normal">/6</text>
<text x="403.8" y="581.8" font-size="10.1" text-anchor="start" fill="#000" stroke="#000" stroke-width="0.28" font-weight="normal">T40</text>
<text x="403.5" y="592.6" font-size="10.1" text-anchor="start" fill="#000" stroke="#000" stroke-width="0.28" font-weight="normal">/15</text>
<path d="M395.9 576 Q399.4 582 402.9 576" fill="none" stroke="#000" stroke-width="1.1"/>
<path d="M71.35 576 Q74.85 582 78.35 576" fill="none" stroke="#000" stroke-width="1.1"/>
<text x="83.4" y="581.8" font-size="10.1" text-anchor="start" fill="#000" stroke="#000" stroke-width="0.28" font-weight="normal">T40</text>
<text x="83.1" y="592.6" font-size="10.1" text-anchor="start" fill="#000" stroke="#000" stroke-width="0.28" font-weight="normal">/23</text>
<rect x="72.6" y="579" width="4.5" height="32.5" fill="#000"/>
<text x="75.15" y="621.2" font-size="10.1" text-anchor="middle" fill="#000" stroke="#000" stroke-width="0.28" font-weight="normal">2,5</text>
<text x="75.15" y="632.6" font-size="10.1" text-anchor="middle" fill="#000" stroke="#000" stroke-width="0.28" font-weight="normal">ro/ge</text>
<path d="M111.6 576 Q115.1 582 118.6 576" fill="none" stroke="#000" stroke-width="1.1"/>
<text x="122.5" y="581.8" font-size="10.1" text-anchor="start" fill="#000" stroke="#000" stroke-width="0.28" font-weight="normal">T40</text>
<text x="122.2" y="592.6" font-size="10.1" text-anchor="start" fill="#000" stroke="#000" stroke-width="0.28" font-weight="normal">/22</text>
<rect x="112.85" y="579" width="4.5" height="32.5" fill="#000"/>
<text x="115.4" y="621.2" font-size="10.1" text-anchor="middle" fill="#000" stroke="#000" stroke-width="0.28" font-weight="normal">2,5</text>
<text x="115.4" y="632.6" font-size="10.1" text-anchor="middle" fill="#000" stroke="#000" stroke-width="0.28" font-weight="normal">ro/gn</text>
<rect x="112.85" y="635.3" width="4.5" height="25.1" fill="#000"/>
<rect x="105.1" y="660.4" width="20" height="11" fill="#fff" stroke="#000" stroke-width="1"/>
<text x="115.1" y="669.7" font-size="10.2" text-anchor="middle" fill="#000" stroke="#000" stroke-width="0.28" font-weight="normal">48</text>
<path d="M153.9 576 Q157.4 582 160.9 576" fill="none" stroke="#000" stroke-width="1.1"/>
<text x="163.9" y="581.8" font-size="10.1" text-anchor="start" fill="#000" stroke="#000" stroke-width="0.28" font-weight="normal">T40</text>
<text x="163.6" y="592.6" font-size="10.1" text-anchor="start" fill="#000" stroke="#000" stroke-width="0.28" font-weight="normal">/21</text>
<rect x="155.15" y="579" width="4.5" height="22.7" fill="#000"/>
<text x="157.7" y="611.4" font-size="10.1" text-anchor="middle" fill="#000" stroke="#000" stroke-width="0.28" font-weight="normal">1,0</text>
<text x="157.7" y="622.4" font-size="10.1" text-anchor="middle" fill="#000" stroke="#000" stroke-width="0.28" font-weight="normal">sw/ro</text>
<text x="157.7" y="632.6" font-size="10.1" text-anchor="middle" fill="#000" stroke="#000" stroke-width="0.28" font-weight="normal">bl/ro</text>
<rect x="155.15" y="634" width="4.5" height="26.4" fill="#000"/>
<rect x="147.4" y="660.4" width="20" height="11" fill="#fff" stroke="#000" stroke-width="1"/>
<text x="157.4" y="669.7" font-size="10.2" text-anchor="middle" fill="#000" stroke="#000" stroke-width="0.28" font-weight="normal">98</text>
<path d="M195.1 576 Q198.6 582 202.1 576" fill="none" stroke="#000" stroke-width="1.1"/>
<text x="203.4" y="581.8" font-size="10.1" text-anchor="start" fill="#000" stroke="#000" stroke-width="0.28" font-weight="normal">T40</text>
<text x="203.1" y="592.6" font-size="10.1" text-anchor="start" fill="#000" stroke="#000" stroke-width="0.28" font-weight="normal">/14</text>
<rect x="196.35" y="579" width="4.5" height="32.5" fill="#000"/>
<text x="198.9" y="621.2" font-size="10.1" text-anchor="middle" fill="#000" stroke="#000" stroke-width="0.28" font-weight="normal">0,5</text>
<text x="198.9" y="632.6" font-size="10.1" text-anchor="middle" fill="#000" stroke="#000" stroke-width="0.28" font-weight="normal">ro/sw</text>
<rect x="196.35" y="635.3" width="4.5" height="25.1" fill="#000"/>
<rect x="188.6" y="660.4" width="20" height="11" fill="#fff" stroke="#000" stroke-width="1"/>
<text x="198.6" y="669.7" font-size="10.2" text-anchor="middle" fill="#000" stroke="#000" stroke-width="0.28" font-weight="normal">123</text>
<path d="M236 576 Q239.5 582 243 576" fill="none" stroke="#000" stroke-width="1.1"/>
<text x="245.9" y="580.8" font-size="10.1" text-anchor="start" fill="#000" stroke="#000" stroke-width="0.28" font-weight="normal">T40</text>
<text x="245.6" y="591.6" font-size="10.1" text-anchor="start" fill="#000" stroke="#000" stroke-width="0.28" font-weight="normal">/11</text>
<rect x="237.25" y="579" width="4.5" height="35" fill="#000"/>
<text x="239.8" y="625.6" font-size="10.1" text-anchor="middle" fill="#000" stroke="#000" stroke-width="0.28" font-weight="normal">1,0</text>
<text x="239.8" y="635.9" font-size="10.1" text-anchor="middle" fill="#000" stroke="#000" stroke-width="0.28" font-weight="normal">ws/ro</text>
<rect x="237.25" y="640" width="4.5" height="19" fill="#000"/>
<rect x="229.5" y="659" width="20" height="11" fill="#fff" stroke="#000" stroke-width="1"/>
<text x="239.5" y="668.3" font-size="10.2" text-anchor="middle" fill="#000" stroke="#000" stroke-width="0.28" font-weight="normal">108</text>
<path d="M276.6 576 Q280.1 582 283.6 576" fill="none" stroke="#000" stroke-width="1.1"/>
<text x="286.6" y="580.8" font-size="10.1" text-anchor="start" fill="#000" stroke="#000" stroke-width="0.28" font-weight="normal">T40</text>
<text x="286.3" y="591.6" font-size="10.1" text-anchor="start" fill="#000" stroke="#000" stroke-width="0.28" font-weight="normal">/26</text>
<rect x="277.85" y="579" width="4.5" height="35" fill="#000"/>
<text x="280.4" y="625.6" font-size="10.1" text-anchor="middle" fill="#000" stroke="#000" stroke-width="0.28" font-weight="normal">1,0</text>
<text x="280.4" y="635.9" font-size="10.1" text-anchor="middle" fill="#000" stroke="#000" stroke-width="0.28" font-weight="normal">sw/ge</text>
<rect x="277.85" y="640" width="4.5" height="95" fill="#000"/>
<circle cx="358.6" cy="576.5" r="2.7" fill="#fff" stroke="#000" stroke-width="1.1"/>
<rect x="356.35" y="579" width="4.5" height="32.5" fill="#000"/>
<text x="358.9" y="621.6" font-size="10.1" text-anchor="middle" fill="#000" stroke="#000" stroke-width="0.28" font-weight="normal">16,0</text>
<text x="358.9" y="632.6" font-size="10.1" text-anchor="middle" fill="#000" stroke="#000" stroke-width="0.28" font-weight="normal">ro</text>
<rect x="356.35" y="634.7" width="4.5" height="23.8" fill="#000"/>
<rect x="348.6" y="658.5" width="20" height="11" fill="#fff" stroke="#000" stroke-width="1"/>
<text x="358.6" y="667.8" font-size="10.2" text-anchor="middle" fill="#000" stroke="#000" stroke-width="0.28" font-weight="normal">34</text>
<path d="M479 576 Q482.5 582 486 576" fill="none" stroke="#000" stroke-width="1.1"/>
<text x="487.3" y="581.8" font-size="10.1" text-anchor="start" fill="#000" stroke="#000" stroke-width="0.28" font-weight="normal">T40</text>
<text x="487" y="592.6" font-size="10.1" text-anchor="start" fill="#000" stroke="#000" stroke-width="0.28" font-weight="normal">/28</text>
<rect x="480.25" y="579" width="4.5" height="32.5" fill="#000"/>
<text x="482.8" y="621.2" font-size="10.1" text-anchor="middle" fill="#000" stroke="#000" stroke-width="0.28" font-weight="normal">0,5</text>
<text x="482.8" y="632.6" font-size="10.1" text-anchor="middle" fill="#000" stroke="#000" stroke-width="0.28" font-weight="normal">ro/sw</text>
<path d="M519.6 576 Q523.1 582 526.6 576" fill="none" stroke="#000" stroke-width="1.1"/>
<text x="529.5" y="580.8" font-size="10.1" text-anchor="start" fill="#000" stroke="#000" stroke-width="0.28" font-weight="normal">T40</text>
<text x="529.2" y="591.6" font-size="10.1" text-anchor="start" fill="#000" stroke="#000" stroke-width="0.28" font-weight="normal">/1</text>
<rect x="520.85" y="579" width="4.5" height="34.3" fill="#000"/>
<text x="523.4" y="625.6" font-size="10.1" text-anchor="middle" fill="#000" stroke="#000" stroke-width="0.28" font-weight="normal">6,0</text>
<text x="523.4" y="635.9" font-size="10.1" text-anchor="middle" fill="#000" stroke="#000" stroke-width="0.28" font-weight="normal">ro/ws</text>
<rect x="520.85" y="640" width="4.5" height="19" fill="#000"/>
<rect x="513.1" y="659" width="20" height="11" fill="#fff" stroke="#000" stroke-width="1"/>
<text x="523.1" y="668.3" font-size="10.2" text-anchor="middle" fill="#000" stroke="#000" stroke-width="0.28" font-weight="normal">153</text>
<circle cx="564.5" cy="576.5" r="2.7" fill="#fff" stroke="#000" stroke-width="1.1"/>
<rect x="562.25" y="579" width="4.5" height="34.3" fill="#000"/>
<text x="564.8" y="625.6" font-size="10.1" text-anchor="middle" fill="#000" stroke="#000" stroke-width="0.28" font-weight="normal">25,0</text>
<text x="564.8" y="635.9" font-size="10.1" text-anchor="middle" fill="#000" stroke="#000" stroke-width="0.28" font-weight="normal">sw</text>
<rect x="562.25" y="640" width="4.5" height="19" fill="#000"/>
<rect x="554.5" y="659" width="20" height="11" fill="#fff" stroke="#000" stroke-width="1"/>
<text x="564.5" y="668.3" font-size="10.2" text-anchor="middle" fill="#000" stroke="#000" stroke-width="0.28" font-weight="normal">37</text>
<circle cx="605.6" cy="576.5" r="2.7" fill="#fff" stroke="#000" stroke-width="1.1"/>
<rect x="603.35" y="579" width="4.5" height="22" fill="#000"/>
<text x="605.9" y="611.6" font-size="10.1" text-anchor="middle" fill="#000" stroke="#000" stroke-width="0.28" font-weight="normal">6,0</text>
<text x="605.9" y="622.6" font-size="10.1" text-anchor="middle" fill="#000" stroke="#000" stroke-width="0.28" font-weight="normal">10,0</text>
<text x="605.9" y="632.6" font-size="10.1" text-anchor="middle" fill="#000" stroke="#000" stroke-width="0.28" font-weight="normal">sw</text>
<rect x="603.35" y="634" width="4.5" height="25.5" fill="#000"/>
<rect x="595.6" y="659.5" width="20" height="11" fill="#fff" stroke="#000" stroke-width="1"/>
<text x="605.6" y="668.8" font-size="10.2" text-anchor="middle" fill="#000" stroke="#000" stroke-width="0.28" font-weight="normal">110</text>
<text x="176.5" y="636.5" font-size="10.1" text-anchor="start" fill="#000" stroke="#000" stroke-width="0.28" font-weight="normal"></text>
<path d="M173 626.76 V633.24 M170.08 627.95 L175.92 632.05 M170.08 632.05 L175.92 627.95" stroke="#000" stroke-width="1.25" fill="none"/>
<path d="M618.9 603.54 V609.66 M616.15 604.66 L621.65 608.54 M616.15 608.54 L621.65 604.66" stroke="#000" stroke-width="1.25" fill="none"/>
<path d="M626 603.54 V609.66 M623.25 604.66 L628.75 608.54 M623.25 608.54 L628.75 604.66" stroke="#000" stroke-width="1.25" fill="none"/>
<rect x="72.6" y="635.3" width="4.5" height="113.4" fill="#000"/>
<path d="M399.4 579 V664.6 H482.5 V635.3" fill="none" stroke="#000" stroke-width="4.4" stroke-linejoin="miter"/>
<circle cx="377" cy="585.8" r="13.6" fill="#fff" stroke="#000" stroke-width="1.1"/>
<text x="377" y="589.3" font-size="10" text-anchor="middle" fill="#000" stroke="#000" stroke-width="0.28" font-weight="normal">507</text>
<circle cx="583" cy="585.8" r="13.6" fill="#fff" stroke="#000" stroke-width="1.1"/>
<text x="583" y="589.3" font-size="10" text-anchor="middle" fill="#000" stroke="#000" stroke-width="0.28" font-weight="normal">502</text>
<circle cx="623.4" cy="585.8" r="13.6" fill="#fff" stroke="#000" stroke-width="1.1"/>
<text x="623.4" y="589.3" font-size="10" text-anchor="middle" fill="#000" stroke="#000" stroke-width="0.28" font-weight="normal">513</text>
<line x1="75.2" y1="734.4" x2="115.3" y2="734.4" stroke="#000" stroke-width="1.2"/>
<circle cx="75.2" cy="734.4" r="3.2" fill="#000"/>
<circle cx="115.3" cy="734.4" r="3.4" fill="#000"/>
<rect x="113.05" y="734.4" width="4.5" height="14.3" fill="#000"/>
<circle cx="55.3" cy="734.4" r="14" fill="#fff" stroke="#000" stroke-width="1.1"/>
<text x="55.3" y="737.9" font-size="10" text-anchor="middle" fill="#000" stroke="#000" stroke-width="0.28" font-weight="normal">B333</text>
<text x="75.2" y="758.2" font-size="10.1" text-anchor="middle" fill="#000" stroke="#000" stroke-width="0.28" font-weight="normal">2,5</text>
<text x="74.2" y="769.3" font-size="10.1" text-anchor="middle" fill="#000" stroke="#000" stroke-width="0.28" font-weight="normal">ro/ge</text>
<rect x="72.95" y="772.7" width="4.5" height="19.3" fill="#000"/>
<text x="115.3" y="758.2" font-size="10.1" text-anchor="middle" fill="#000" stroke="#000" stroke-width="0.28" font-weight="normal">2,5</text>
<text x="114.3" y="769.3" font-size="10.1" text-anchor="middle" fill="#000" stroke="#000" stroke-width="0.28" font-weight="normal">ro/ge</text>
<rect x="113.05" y="772.7" width="4.5" height="19.3" fill="#000"/>
<text x="56.6" y="804.9" font-size="16" text-anchor="start" fill="#000" stroke="#000" stroke-width="0.05" font-weight="normal">J</text>
<text x="65.8" y="804.9" font-size="9.8" text-anchor="start" fill="#000" stroke="#000" stroke-width="0.28" font-weight="normal">514</text>
<path d="M90.3 795.56 V802.04 M87.38 796.75 L93.22 800.85 M87.38 800.85 L93.22 796.75" stroke="#000" stroke-width="1.25" fill="none"/>
<text x="98.2" y="804.9" font-size="16" text-anchor="start" fill="#000" stroke="#000" stroke-width="0.05" font-weight="normal">J</text>
<text x="107.4" y="804.9" font-size="9.8" text-anchor="start" fill="#000" stroke="#000" stroke-width="0.28" font-weight="normal">514</text>
<path d="M132.7 795.56 V802.04 M129.78 796.75 L135.62 800.85 M129.78 800.85 L135.62 796.75" stroke="#000" stroke-width="1.25" fill="none"/>
<text x="69" y="815.9" font-size="9.8" text-anchor="middle" fill="#000" stroke="#000" stroke-width="0.28" font-weight="normal">T20a/11</text>
<text x="113.4" y="815.9" font-size="9.8" text-anchor="middle" fill="#000" stroke="#000" stroke-width="0.28" font-weight="normal">T20a/18</text>
<line x1="280.1" y1="734.8" x2="632" y2="734.8" stroke="#000" stroke-width="1.2"/>
<circle cx="280.1" cy="734.8" r="3.3" fill="#000"/>
<circle cx="259.5" cy="734.5" r="13.4" fill="none" stroke="#000" stroke-width="1"/>
<text x="259.5" y="738.2" font-size="10" text-anchor="middle" fill="#000" stroke="#000" stroke-width="0.28" font-weight="normal">B368</text>
<text x="646.5" y="738.2" font-size="10" text-anchor="middle" fill="#000" stroke="#000" stroke-width="0.28" font-weight="normal">B368</text>
<circle cx="256.2" cy="734.8" r="32" fill="rgba(110,160,240,0.38)" stroke="#000" stroke-width="1.6"/>
<circle cx="642.8" cy="734.8" r="32.2" fill="rgba(110,160,240,0.38)" stroke="#000" stroke-width="1.6"/>
<path d="M733 355.8 L743.3 365.5 L740.2 368.8 L733 362 L725.8 368.8 L722.7 365.5 Z" fill="#b9bad6" stroke="#5a5c78" stroke-width="1" stroke-linejoin="miter"/>
<path d="M733 421 L743.3 411.3 L740.2 408 L733 414.8 L725.8 408 L722.7 411.3 Z" fill="#b9bad6" stroke="#5a5c78" stroke-width="1" stroke-linejoin="miter"/>
<path d="M701.2 388.3 L710.9 378.3 L714.2 381.4 L707.4 388.3 L714.2 395.2 L710.9 398.3 Z" fill="#b9bad6" stroke="#5a5c78" stroke-width="1" stroke-linejoin="miter"/>
<path d="M766.6 388.3 L756.9 378.3 L753.6 381.4 L760.4 388.3 L753.6 395.2 L756.9 398.3 Z" fill="#b9bad6" stroke="#5a5c78" stroke-width="1" stroke-linejoin="miter"/>
<path d="M735 466 L740.5 471.5" stroke="#7a5a40" stroke-width="3.2" stroke-linecap="round"/>
<path d="M735 466 L740.5 471.5" stroke="#d8a878" stroke-width="1.4" stroke-linecap="round"/>
<circle cx="730.5" cy="461.5" r="6.6" fill="#b4b8d4" stroke="#50546e" stroke-width="1.3"/>
<circle cx="729" cy="460" r="3" fill="#d6d9ea"/>
<path d="M735 492.5 L740.5 498" stroke="#7a5a40" stroke-width="3.2" stroke-linecap="round"/>
<path d="M735 492.5 L740.5 498" stroke="#d8a878" stroke-width="1.4" stroke-linecap="round"/>
<circle cx="730.5" cy="488" r="6.6" fill="#b4b8d4" stroke="#50546e" stroke-width="1.3"/>
<circle cx="729" cy="486.5" r="3" fill="#d6d9ea"/>
<path d="M735 492.5 L740.5 498" stroke="#7a5a40" stroke-width="3.2" stroke-linecap="round"/>
<path d="M735 492.5 L740.5 498" stroke="#d8a878" stroke-width="1.4" stroke-linecap="round"/>
<circle cx="730.5" cy="488" r="6.6" fill="#b4b8d4" stroke="#50546e" stroke-width="1.3"/>
<circle cx="729" cy="486.5" r="3" fill="#d6d9ea"/>
<path d="M726.9 488 H734.1 M730.5 484.4 V491.6" stroke="#111" stroke-width="1.3"/>
<path d="M735 518.5 L740.5 524" stroke="#7a5a40" stroke-width="3.2" stroke-linecap="round"/>
<path d="M735 518.5 L740.5 524" stroke="#d8a878" stroke-width="1.4" stroke-linecap="round"/>
<circle cx="730.5" cy="514" r="6.6" fill="#b4b8d4" stroke="#50546e" stroke-width="1.3"/>
<circle cx="729" cy="512.5" r="3" fill="#d6d9ea"/>
<path d="M726.9 514 H734.1" stroke="#111" stroke-width="1.3"/>
<circle cx="866.5" cy="415.2" r="14.8" fill="none" stroke="#000" stroke-width="1.8"/>
<text x="870" y="419.2" font-size="10.5" text-anchor="middle">502</text>
<circle cx="866.5" cy="450" r="14.8" fill="none" stroke="#000" stroke-width="1.8"/>
<text x="870" y="454" font-size="10.5" text-anchor="middle">507</text>
<circle cx="866.5" cy="485.5" r="14.8" fill="none" stroke="#000" stroke-width="1.8"/>
<text x="870" y="489.5" font-size="10.5" text-anchor="middle">513</text>
<circle cx="866.5" cy="520.7" r="14.8" fill="none" stroke="#000" stroke-width="1.8"/>
<text x="872.5" y="524.7" font-size="10.5" text-anchor="middle">B333</text>
<circle cx="866.5" cy="555.4" r="14.8" fill="none" stroke="#000" stroke-width="1.8"/>
<rect x="851" y="548.6" width="37" height="13.7" fill="#4d94f0"/>
<rect x="883.2" y="540" width="14.3" height="34.4" fill="#5b97ee"/>
<rect x="851" y="572.3" width="46.5" height="2.1" fill="#5b97ee"/>
<text x="872.5" y="560" font-size="11" font-weight="bold" fill="#fff" text-anchor="middle">B368</text>
<g transform="translate(1179,103.7)"><path d="M6 3.8 L7 0.8 H11.8 L12.8 3.8 Z" fill="#979797" stroke="#4a4a4a" stroke-width="1.1"/><rect x="0.6" y="3.6" width="17.2" height="11" rx="1.6" fill="#989898" stroke="#4a4a4a" stroke-width="1.2"/><circle cx="9.2" cy="9.2" r="4.3" fill="#9a9a9a" stroke="#444" stroke-width="1.1"/><circle cx="9.2" cy="9.2" r="3.1" fill="#999" stroke="#f6f6f6" stroke-width="1.2"/><rect x="2.4" y="5.2" width="1.8" height="1.8" fill="#fff"/><rect x="0.5" y="0.5" width="17" height="14" fill="none" stroke="#000" stroke-width="1" stroke-dasharray="1 1"/></g>
<g transform="translate(1170,139.7)"><path d="M6 3.8 L7 0.8 H11.8 L12.8 3.8 Z" fill="#979797" stroke="#4a4a4a" stroke-width="1.1"/><rect x="0.6" y="3.6" width="17.2" height="11" rx="1.6" fill="#989898" stroke="#4a4a4a" stroke-width="1.2"/><circle cx="9.2" cy="9.2" r="4.3" fill="#9a9a9a" stroke="#444" stroke-width="1.1"/><circle cx="9.2" cy="9.2" r="3.1" fill="#999" stroke="#f6f6f6" stroke-width="1.2"/><rect x="2.4" y="5.2" width="1.8" height="1.8" fill="#fff"/></g>
<g transform="translate(1176,158.7)"><path d="M6 3.8 L7 0.8 H11.8 L12.8 3.8 Z" fill="#979797" stroke="#4a4a4a" stroke-width="1.1"/><rect x="0.6" y="3.6" width="17.2" height="11" rx="1.6" fill="#989898" stroke="#4a4a4a" stroke-width="1.2"/><circle cx="9.2" cy="9.2" r="4.3" fill="#9a9a9a" stroke="#444" stroke-width="1.1"/><circle cx="9.2" cy="9.2" r="3.1" fill="#999" stroke="#f6f6f6" stroke-width="1.2"/><rect x="2.4" y="5.2" width="1.8" height="1.8" fill="#fff"/></g>
<g transform="translate(1176,177.6)"><path d="M6 3.8 L7 0.8 H11.8 L12.8 3.8 Z" fill="#979797" stroke="#4a4a4a" stroke-width="1.1"/><rect x="0.6" y="3.6" width="17.2" height="11" rx="1.6" fill="#989898" stroke="#4a4a4a" stroke-width="1.2"/><circle cx="9.2" cy="9.2" r="4.3" fill="#9a9a9a" stroke="#444" stroke-width="1.1"/><circle cx="9.2" cy="9.2" r="3.1" fill="#999" stroke="#f6f6f6" stroke-width="1.2"/><rect x="2.4" y="5.2" width="1.8" height="1.8" fill="#fff"/></g>
<g transform="translate(1176,196.8)"><path d="M6 3.8 L7 0.8 H11.8 L12.8 3.8 Z" fill="#979797" stroke="#4a4a4a" stroke-width="1.1"/><rect x="0.6" y="3.6" width="17.2" height="11" rx="1.6" fill="#989898" stroke="#4a4a4a" stroke-width="1.2"/><circle cx="9.2" cy="9.2" r="4.3" fill="#9a9a9a" stroke="#444" stroke-width="1.1"/><circle cx="9.2" cy="9.2" r="3.1" fill="#999" stroke="#f6f6f6" stroke-width="1.2"/><rect x="2.4" y="5.2" width="1.8" height="1.8" fill="#fff"/></g>
<g transform="translate(1183,215.9)"><path d="M6 3.8 L7 0.8 H11.8 L12.8 3.8 Z" fill="#979797" stroke="#4a4a4a" stroke-width="1.1"/><rect x="0.6" y="3.6" width="17.2" height="11" rx="1.6" fill="#989898" stroke="#4a4a4a" stroke-width="1.2"/><circle cx="9.2" cy="9.2" r="4.3" fill="#9a9a9a" stroke="#444" stroke-width="1.1"/><circle cx="9.2" cy="9.2" r="3.1" fill="#999" stroke="#f6f6f6" stroke-width="1.2"/><rect x="2.4" y="5.2" width="1.8" height="1.8" fill="#fff"/></g>
<g transform="translate(1183,234.9)"><path d="M6 3.8 L7 0.8 H11.8 L12.8 3.8 Z" fill="#979797" stroke="#4a4a4a" stroke-width="1.1"/><rect x="0.6" y="3.6" width="17.2" height="11" rx="1.6" fill="#989898" stroke="#4a4a4a" stroke-width="1.2"/><circle cx="9.2" cy="9.2" r="4.3" fill="#9a9a9a" stroke="#444" stroke-width="1.1"/><circle cx="9.2" cy="9.2" r="3.1" fill="#999" stroke="#f6f6f6" stroke-width="1.2"/><rect x="2.4" y="5.2" width="1.8" height="1.8" fill="#fff"/></g>
<g transform="translate(1183,253.9)"><path d="M6 3.8 L7 0.8 H11.8 L12.8 3.8 Z" fill="#979797" stroke="#4a4a4a" stroke-width="1.1"/><rect x="0.6" y="3.6" width="17.2" height="11" rx="1.6" fill="#989898" stroke="#4a4a4a" stroke-width="1.2"/><circle cx="9.2" cy="9.2" r="4.3" fill="#9a9a9a" stroke="#444" stroke-width="1.1"/><circle cx="9.2" cy="9.2" r="3.1" fill="#999" stroke="#f6f6f6" stroke-width="1.2"/><rect x="2.4" y="5.2" width="1.8" height="1.8" fill="#fff"/></g>
<g transform="translate(1183,272.9)"><path d="M6 3.8 L7 0.8 H11.8 L12.8 3.8 Z" fill="#979797" stroke="#4a4a4a" stroke-width="1.1"/><rect x="0.6" y="3.6" width="17.2" height="11" rx="1.6" fill="#989898" stroke="#4a4a4a" stroke-width="1.2"/><circle cx="9.2" cy="9.2" r="4.3" fill="#9a9a9a" stroke="#444" stroke-width="1.1"/><circle cx="9.2" cy="9.2" r="3.1" fill="#999" stroke="#f6f6f6" stroke-width="1.2"/><rect x="2.4" y="5.2" width="1.8" height="1.8" fill="#fff"/></g>
<g transform="translate(1183,291.8)"><path d="M6 3.8 L7 0.8 H11.8 L12.8 3.8 Z" fill="#979797" stroke="#4a4a4a" stroke-width="1.1"/><rect x="0.6" y="3.6" width="17.2" height="11" rx="1.6" fill="#989898" stroke="#4a4a4a" stroke-width="1.2"/><circle cx="9.2" cy="9.2" r="4.3" fill="#9a9a9a" stroke="#444" stroke-width="1.1"/><circle cx="9.2" cy="9.2" r="3.1" fill="#999" stroke="#f6f6f6" stroke-width="1.2"/><rect x="2.4" y="5.2" width="1.8" height="1.8" fill="#fff"/></g>
<g transform="translate(1183,310.8)"><path d="M6 3.8 L7 0.8 H11.8 L12.8 3.8 Z" fill="#979797" stroke="#4a4a4a" stroke-width="1.1"/><rect x="0.6" y="3.6" width="17.2" height="11" rx="1.6" fill="#989898" stroke="#4a4a4a" stroke-width="1.2"/><circle cx="9.2" cy="9.2" r="4.3" fill="#9a9a9a" stroke="#444" stroke-width="1.1"/><circle cx="9.2" cy="9.2" r="3.1" fill="#999" stroke="#f6f6f6" stroke-width="1.2"/><rect x="2.4" y="5.2" width="1.8" height="1.8" fill="#fff"/></g>
<g transform="translate(1183,329.8)"><path d="M6 3.8 L7 0.8 H11.8 L12.8 3.8 Z" fill="#979797" stroke="#4a4a4a" stroke-width="1.1"/><rect x="0.6" y="3.6" width="17.2" height="11" rx="1.6" fill="#989898" stroke="#4a4a4a" stroke-width="1.2"/><circle cx="9.2" cy="9.2" r="4.3" fill="#9a9a9a" stroke="#444" stroke-width="1.1"/><circle cx="9.2" cy="9.2" r="3.1" fill="#999" stroke="#f6f6f6" stroke-width="1.2"/><rect x="2.4" y="5.2" width="1.8" height="1.8" fill="#fff"/></g>
<text x="850.8" y="116.9" font-size="12.8" fill="#141414" stroke="#141414" stroke-width="0.15" >J317</text>
<text x="898" y="118.2" font-size="12.5" fill="#141414" stroke="#141414" stroke-width="0.15" >-</text>
<text x="910.6" y="118.7" font-size="13.5" fill="#141414" stroke="#141414" stroke-width="0.15" letter-spacing="-0.2">przekaźnik zasilania napięciowego, zacisk 30</text>
<text x="850.8" y="135.5" font-size="12.8" fill="#141414" stroke="#141414" stroke-width="0.15" >J514</text>
<text x="898" y="135.2" font-size="12.5" fill="#141414" stroke="#141414" stroke-width="0.15" >-</text>
<text x="910.6" y="135.7" font-size="13.5" fill="#141414" stroke="#141414" stroke-width="0.15" letter-spacing="-0.2">sterownik elektronicznej ręcznej skrzyni biegów</text>
<text x="850.8" y="152.9" font-size="12.8" fill="#141414" stroke="#141414" stroke-width="0.15" >J519</text>
<text x="898" y="154.2" font-size="12.5" fill="#141414" stroke="#141414" stroke-width="0.15" >-</text>
<text x="910.6" y="154.7" font-size="13.5" fill="#141414" stroke="#141414" stroke-width="0.15" letter-spacing="-0.2">sterownik instalacji elektrycznej samochodu</text>
<text x="850.8" y="171.9" font-size="12.8" fill="#141414" stroke="#141414" stroke-width="0.15" >SA1</text>
<text x="898" y="173.2" font-size="12.5" fill="#141414" stroke="#141414" stroke-width="0.15" >-</text>
<text x="910.6" y="173.7" font-size="13.5" fill="#141414" stroke="#141414" stroke-width="0.15" letter-spacing="-0.2">bezpiecznik 1 w uchwycie bezpieczników -A-</text>
<text x="850.8" y="190.8" font-size="12.8" fill="#141414" stroke="#141414" stroke-width="0.15" >SA3</text>
<text x="898" y="192.1" font-size="12.5" fill="#141414" stroke="#141414" stroke-width="0.15" >-</text>
<text x="910.6" y="192.6" font-size="13.5" fill="#141414" stroke="#141414" stroke-width="0.15" letter-spacing="-0.2">bezpiecznik 3 w uchwycie bezpieczników -A-</text>
<text x="850.8" y="210" font-size="12.8" fill="#141414" stroke="#141414" stroke-width="0.15" >SB6</text>
<text x="898" y="211.3" font-size="12.5" fill="#141414" stroke="#141414" stroke-width="0.15" >-</text>
<text x="910.6" y="211.8" font-size="13.5" fill="#141414" stroke="#141414" stroke-width="0.15" letter-spacing="-0.2">bezpiecznik 6 w uchwycie bezpieczników -B-</text>
<text x="850.8" y="229.1" font-size="12.8" fill="#141414" stroke="#141414" stroke-width="0.15" >SB10</text>
<text x="898" y="230.4" font-size="12.5" fill="#141414" stroke="#141414" stroke-width="0.15" >-</text>
<text x="910.6" y="230.9" font-size="13.5" fill="#141414" stroke="#141414" stroke-width="0.15" letter-spacing="-0.2">bezpiecznik 10 w uchwycie bezpieczników -B-</text>
<text x="850.8" y="248.1" font-size="12.8" fill="#141414" stroke="#141414" stroke-width="0.15" >SB13</text>
<text x="898" y="249.4" font-size="12.5" fill="#141414" stroke="#141414" stroke-width="0.15" >-</text>
<text x="910.6" y="249.9" font-size="13.5" fill="#141414" stroke="#141414" stroke-width="0.15" letter-spacing="-0.2">bezpiecznik 13 w uchwycie bezpieczników -B-</text>
<text x="850.8" y="267.1" font-size="12.8" fill="#141414" stroke="#141414" stroke-width="0.15" >SB14</text>
<text x="898" y="268.4" font-size="12.5" fill="#141414" stroke="#141414" stroke-width="0.15" >-</text>
<text x="910.6" y="268.9" font-size="13.5" fill="#141414" stroke="#141414" stroke-width="0.15" letter-spacing="-0.2">bezpiecznik 14 w uchwycie bezpieczników -B-</text>
<text x="850.8" y="286.1" font-size="12.8" fill="#141414" stroke="#141414" stroke-width="0.15" >SB16</text>
<text x="898" y="287.4" font-size="12.5" fill="#141414" stroke="#141414" stroke-width="0.15" >-</text>
<text x="910.6" y="287.9" font-size="13.5" fill="#141414" stroke="#141414" stroke-width="0.15" letter-spacing="-0.2">bezpiecznik 16 w uchwycie bezpieczników -B-</text>
<text x="850.8" y="305" font-size="12.8" fill="#141414" stroke="#141414" stroke-width="0.15" >SB20</text>
<text x="898" y="306.3" font-size="12.5" fill="#141414" stroke="#141414" stroke-width="0.15" >-</text>
<text x="910.6" y="306.8" font-size="13.5" fill="#141414" stroke="#141414" stroke-width="0.15" letter-spacing="-0.2">bezpiecznik 20 w uchwycie bezpieczników -B-</text>
<text x="850.8" y="324" font-size="12.8" fill="#141414" stroke="#141414" stroke-width="0.15" >SB23</text>
<text x="898" y="325.3" font-size="12.5" fill="#141414" stroke="#141414" stroke-width="0.15" >-</text>
<text x="910.6" y="325.8" font-size="13.5" fill="#141414" stroke="#141414" stroke-width="0.15" letter-spacing="-0.2">bezpiecznik 23 w uchwycie bezpieczników -B-</text>
<text x="850.8" y="343" font-size="12.8" fill="#141414" stroke="#141414" stroke-width="0.15" >SB28</text>
<text x="898" y="344.3" font-size="12.5" fill="#141414" stroke="#141414" stroke-width="0.15" >-</text>
<text x="910.6" y="344.8" font-size="13.5" fill="#141414" stroke="#141414" stroke-width="0.15" letter-spacing="-0.2">bezpiecznik 28 w uchwycie bezpieczników -B-</text>
<text x="850.8" y="361.7" font-size="12.8" fill="#141414" stroke="#141414" stroke-width="0.15" >T16g</text>
<text x="898" y="361.4" font-size="12.5" fill="#141414" stroke="#141414" stroke-width="0.15" >-</text>
<text x="910.6" y="361.9" font-size="13.5" fill="#141414" stroke="#141414" stroke-width="0.15" letter-spacing="-0.2">złącze 16-stykowe, czarne</text>
<text x="850.8" y="378.8" font-size="12.8" fill="#141414" stroke="#141414" stroke-width="0.15" >T20a</text>
<text x="898" y="378.5" font-size="12.5" fill="#141414" stroke="#141414" stroke-width="0.15" >-</text>
<text x="910.6" y="379" font-size="13.5" fill="#141414" stroke="#141414" stroke-width="0.15" letter-spacing="-0.2">złącze 20-stykowe</text>
<text x="850.8" y="395.1" font-size="12.8" fill="#141414" stroke="#141414" stroke-width="0.15" >T40</text>
<text x="898" y="394.8" font-size="12.5" fill="#141414" stroke="#141414" stroke-width="0.15" >-</text>
<text x="910.6" y="395.3" font-size="13.5" fill="#141414" stroke="#141414" stroke-width="0.15" letter-spacing="-0.2">złącze 40-stykowe, pod skrzynką elektryczną, w komorze silnika</text>
<text x="898" y="412.3" font-size="12.5" fill="#141414" stroke="#141414" stroke-width="0.15" >-</text>
<text x="910.6" y="412.8" font-size="13.5" fill="#141414" stroke="#141414" stroke-width="0.15" letter-spacing="-0.2">połączenie śrubowe 1 (30a) na płycie przekaźników</text>
<text x="898" y="447.3" font-size="12.5" fill="#141414" stroke="#141414" stroke-width="0.15" >-</text>
<text x="910.6" y="447.8" font-size="13.5" fill="#141414" stroke="#141414" stroke-width="0.15" letter-spacing="-0.2">połączenie śrubowe (30) przy uchwycie bezpieczników na akumulatorze</text>
<text x="898" y="482.3" font-size="12.5" fill="#141414" stroke="#141414" stroke-width="0.15" >-</text>
<text x="910.6" y="482.8" font-size="13.5" fill="#141414" stroke="#141414" stroke-width="0.15" letter-spacing="-0.2">połączenie śrubowe 3 (30a) na płycie przekaźników</text>
<text x="898" y="517.3" font-size="12.5" fill="#141414" stroke="#141414" stroke-width="0.15" >-</text>
<text x="910.6" y="517.8" font-size="13.5" fill="#141414" stroke="#141414" stroke-width="0.15" letter-spacing="-0.2">połączenie 19 (30a) z potencjałem plus w głównej wiązce przewodów</text>
<text x="898" y="552.3" font-size="12.5" fill="#141414" stroke="#141414" stroke-width="0.15" >-</text>
<text x="910.6" y="552.8" font-size="13.5" fill="#141414" stroke="#141414" stroke-width="0.15" letter-spacing="-0.2">połączenie 19 (87a) z potencjałem plus w głównej wiązce przewodów</text>
<text x="851.5" y="585.7" font-size="12.3" fill="#141414" stroke="#141414" stroke-width="0.15" >*</text>
<text x="898" y="587.7" font-size="12.5" fill="#141414" stroke="#141414" stroke-width="0.15" >-</text>
<text x="910.6" y="588.2" font-size="13.5" fill="#141414" stroke="#141414" stroke-width="0.15" letter-spacing="-0.2">tylko samochody z preselekcyjną skrzynią biegów</text>
<text x="851.5" y="602.7" font-size="12.3" fill="#141414" stroke="#141414" stroke-width="0.15" >**</text>
<text x="898" y="604.7" font-size="12.5" fill="#141414" stroke="#141414" stroke-width="0.15" >-</text>
<text x="910.6" y="605.2" font-size="13.5" fill="#141414" stroke="#141414" stroke-width="0.15" letter-spacing="-0.2">od listopada 2005</text>
<text x="851.5" y="619.6" font-size="12.3" fill="#141414" stroke="#141414" stroke-width="0.15" >***</text>
<text x="898" y="621.6" font-size="12.5" fill="#141414" stroke="#141414" stroke-width="0.15" >-</text>
<text x="910.6" y="622.1" font-size="13.5" fill="#141414" stroke="#141414" stroke-width="0.15" letter-spacing="-0.2">do listopada 2005</text>
<text x="851.5" y="636.7" font-size="12.3" fill="#141414" stroke="#141414" stroke-width="0.15" >****</text>
<text x="898" y="638.7" font-size="12.5" fill="#141414" stroke="#141414" stroke-width="0.15" >-</text>
<text x="910.6" y="639.2" font-size="13.5" fill="#141414" stroke="#141414" stroke-width="0.15" letter-spacing="-0.2">wyeliminowano w samochodach z alternatorem 180 A</text>
<text x="705.5" y="665.8" font-size="11.6" fill="#1a1a1a">ws</text><text x="732.5" y="665.8" font-size="11.6" fill="#1a1a1a">=</text><text x="745.5" y="665.8" font-size="11.6" fill="#1a1a1a">biały</text>
<text x="705.5" y="679.77" font-size="11.6" fill="#1a1a1a">sw</text><text x="732.5" y="679.77" font-size="11.6" fill="#1a1a1a">=</text><text x="745.5" y="679.77" font-size="11.6" fill="#1a1a1a">czarny</text>
<text x="705.5" y="693.74" font-size="11.6" fill="#1a1a1a">ro</text><text x="732.5" y="693.74" font-size="11.6" fill="#1a1a1a">=</text><text x="745.5" y="693.74" font-size="11.6" fill="#1a1a1a">czerwony</text>
<text x="705.5" y="707.71" font-size="11.6" fill="#1a1a1a">rt</text><text x="732.5" y="707.71" font-size="11.6" fill="#1a1a1a">=</text><text x="745.5" y="707.71" font-size="11.6" fill="#1a1a1a">czerwony</text>
<text x="705.5" y="721.68" font-size="11.6" fill="#1a1a1a">br</text><text x="732.5" y="721.68" font-size="11.6" fill="#1a1a1a">=</text><text x="745.5" y="721.68" font-size="11.6" fill="#1a1a1a">brązowy</text>
<text x="705.5" y="735.65" font-size="11.6" fill="#1a1a1a">gn</text><text x="732.5" y="735.65" font-size="11.6" fill="#1a1a1a">=</text><text x="745.5" y="735.65" font-size="11.6" fill="#1a1a1a">zielony</text>
<text x="705.5" y="749.62" font-size="11.6" fill="#1a1a1a">bl</text><text x="732.5" y="749.62" font-size="11.6" fill="#1a1a1a">=</text><text x="745.5" y="749.62" font-size="11.6" fill="#1a1a1a">niebieski</text>
<text x="705.5" y="763.59" font-size="11.6" fill="#1a1a1a">gr</text><text x="732.5" y="763.59" font-size="11.6" fill="#1a1a1a">=</text><text x="745.5" y="763.59" font-size="11.6" fill="#1a1a1a">szary</text>
<text x="705.5" y="777.56" font-size="11.6" fill="#1a1a1a">li</text><text x="732.5" y="777.56" font-size="11.6" fill="#1a1a1a">=</text><text x="745.5" y="777.56" font-size="11.6" fill="#1a1a1a">liliowy</text>
<text x="705.5" y="791.53" font-size="11.6" fill="#1a1a1a">vi</text><text x="732.5" y="791.53" font-size="11.6" fill="#1a1a1a">=</text><text x="745.5" y="791.53" font-size="11.6" fill="#1a1a1a">liliowy</text>
<text x="705.5" y="805.5" font-size="11.6" fill="#1a1a1a">ge</text><text x="732.5" y="805.5" font-size="11.6" fill="#1a1a1a">=</text><text x="745.5" y="805.5" font-size="11.6" fill="#1a1a1a">żółty</text>
<text x="705.5" y="819.47" font-size="11.6" fill="#1a1a1a">or</text><text x="732.5" y="819.47" font-size="11.6" fill="#1a1a1a">=</text><text x="745.5" y="819.47" font-size="11.6" fill="#1a1a1a">oranż</text>
</svg>
<div id="scroll" class="a">
  <svg class="a" style="left:3px;top:6px" width="10" height="6"><path d="M0.5 5 L4.5 1 L8.5 5 Z" fill="#3a3a3a"/></svg>
  <div class="a" style="left:0;top:48px;width:16px;height:39px;border:1px solid #9a9a9a;border-radius:2px;background:linear-gradient(90deg,#f4f4f4,#e8e8e8 50%,#cfcfcf)"><div class="a" style="left:4px;top:14px;width:7px;height:1px;background:#555;box-shadow:0 2px 0 #555,0 4px 0 #555,0 6px 0 #555"></div></div>
  <svg class="a" style="left:3px;top:703px" width="10" height="6"><path d="M0.5 1 L4.5 5 L8.5 1 Z" fill="#3a3a3a"/></svg>
</div>
<div id="tabs" class="a">
 <div class="a" style="left:0;top:-1px;width:2px;height:17px;background:#8c8c8c"></div>
 <div class="a" style="left:0;top:-1px;width:36px;height:1px;background:#555"></div>
 <div class="a" style="left:2px;top:0;width:16px;height:16px;background:#f0f0f0;border-style:solid;border-width:1px 2px 2px 1px;border-color:#fff #9a9a9a #9a9a9a #fff"><svg class="a" style="left:3px;top:3px" width="7" height="10"><path d="M6 0.5 V8.5 L1 4.5 Z" fill="#555"/></svg></div>
 <div class="a" style="left:18px;top:0;width:1px;height:16px;background:#555"></div>
 <div class="a" style="left:19px;top:0;width:16px;height:16px;background:#f0f0f0;border-style:solid;border-width:1px 2px 2px 1px;border-color:#fff #9a9a9a #9a9a9a #fff"><svg class="a" style="left:4px;top:3px" width="7" height="10"><path d="M1 0.5 V8.5 L6 4.5 Z" fill="#555"/></svg></div>
 <div class="a" style="left:35px;top:0;width:1px;height:16px;background:#555"></div>
 <svg class="a" style="left:0;top:-1px" width="270" height="18"><path d="M37 0 L44 16 H117 L124 0 Z" fill="#f0f0f0"/><path d="M37 0 L44.5 16.5 M116.5 16.5 L123 2" stroke="#000" stroke-width="1.1" fill="none"/><path d="M118 0 L125 16 H248 L255 0 Z" fill="#fff"/><path d="M118 0 L125.5 16.5 M248 16.5 L255.5 0" stroke="#000" stroke-width="1.1" fill="none"/></svg>
 <span class="a" style="left:49px;top:0px;font-size:11.7px;color:#1a1a1a">Zestawienie</span>
 <span class="a" style="left:127px;top:0px;font-size:11.8px;font-weight:bold;color:#111">Schemat elektryczny</span>
 <div class="a" style="left:1598px;top:0;width:2px;height:17px;background:#f0f0f0"></div>
</div>
<div id="status" class="a">
 <div class="sp" style="left:868px;width:69px;letter-spacing:-0.55px;padding-left:0">9000000008</div>
 <div class="sp" style="left:939px;width:144px"></div>
 <div class="sp" style="left:1084px;width:15px">6</div>
 <div class="sp" style="left:1101px;width:30px">3C2</div>
 <div class="sp" style="left:1133px;width:42px">Passat</div>
 <div class="sp" style="left:1177px;width:30px">BKP</div>
 <div class="sp" style="left:1209px;width:32px">FUQ</div>
 <div class="sp" style="left:1243px;width:36px"></div>
 <div class="sp" style="left:1281px;width:86px"></div>
 <div class="sp" style="left:1369px;width:57px"></div>
 <div class="sp" style="left:1428px;width:89px"></div>
 <div class="sp" style="left:1519px;width:48px">ADMIN</div>
 <div class="sp" style="left:1569px;width:30px"></div>
</div>
<div id="task" class="a">
<svg class="a" style="left:5px;top:0px" width="46" height="40"><defs><radialGradient id="orb" cx="50%" cy="35%" r="60%"><stop offset="0" stop-color="#7ab8e8"/><stop offset="0.5" stop-color="#2a6ab0"/><stop offset="1" stop-color="#0a2a50"/></radialGradient></defs><circle cx="22" cy="20" r="18.5" fill="url(#orb)" stroke="#1a3a5a" stroke-width="1"/><path d="M12 14 Q15 11 21 13 V19 Q15 17 12 20 Z" fill="#e05a20"/><path d="M23 13 Q28 15 33 12 V18 Q28 21 23 19 Z" fill="#7ab830"/><path d="M12 22 Q15 19 21 21 V27 Q15 25 12 28 Z" fill="#2a90e0"/><path d="M23 21 Q28 23 33 20 V26 Q28 29 23 27 Z" fill="#f0c020"/></svg>
<div class="tbtn" style="left:60px;width:50px"></div>
<svg class="a" style="left:68px;top:4px" width="36" height="32"><circle cx="18" cy="17" r="9" fill="none" stroke="#2a80d8" stroke-width="5"/><path d="M10 17 H26" stroke="#2a80d8" stroke-width="3.5"/><rect x="15" y="19" width="12" height="3" fill="#1a2030"/><path d="M4 28 Q2 20 18 8 Q32 0 30 6" stroke="#e0b030" stroke-width="2.5" fill="none"/></svg>
<div class="a" style="left:113px;top:2px;width:4px;height:37px;border-left:1px solid #3a4252;border-right:1px solid #3a4252"></div>
<svg class="a" style="left:134px;top:4px" width="36" height="32"><rect x="1" y="6" width="32" height="24" rx="2" fill="#f0d890" stroke="#b89840"/><rect x="3" y="3" width="8" height="5" fill="#30a030"/><rect x="13" y="4" width="8" height="4" fill="#e04030"/><rect x="22" y="5" width="8" height="4" fill="#3090e0"/><rect x="6" y="18" width="22" height="12" fill="#a8d0f0" stroke="#5090c0"/></svg>
<svg class="a" style="left:196px;top:6px" width="30" height="28"><rect x="1" y="2" width="26" height="25" rx="2" fill="#5a9ad0" stroke="#3a6aa0"/><circle cx="13" cy="14" r="8" fill="#fff"/><path d="M10 9 L18 14 L10 19 Z" fill="#f08020"/></svg>
<div class="tbtn" style="left:246px;width:58px"></div>
<svg class="a" style="left:256px;top:3px" width="38" height="34"><ellipse cx="19" cy="17" rx="13.5" ry="14" fill="none" stroke="#e01010" stroke-width="6"/></svg>
<div class="tbtn" style="left:308px;width:58px;background:linear-gradient(#8a909c,#5a606c 50%,#4a505c);border-color:#a0a8b8"></div>
<svg class="a" style="left:318px;top:6px" width="38" height="30"><rect x="14" y="2" width="18" height="20" fill="#bbb" stroke="#333"/><rect x="17" y="5" width="11" height="13" fill="#1030d0"/><circle cx="11" cy="12" r="5" fill="#111"/><rect x="5" y="17" width="10" height="9" fill="#2a9a9a"/><rect x="30" y="6" width="5" height="16" fill="#ccc" stroke="#333"/></svg>
<span class="tray" style="left:1340px;top:11px">PL</span>
<svg class="a" style="left:1360px;top:9px" width="20" height="18"><rect x="1" y="6" width="16" height="9" rx="1.5" fill="#bfc4cc" stroke="#e8e8e8"/><path d="M3 9 H15 M3 12 H15" stroke="#7a808a" stroke-dasharray="1.5 1"/><path d="M9 6 Q10 2 16 1" stroke="#ccc" fill="none"/></svg>
<svg class="a" style="left:1388px;top:16px" width="10" height="6"><path d="M1 5 L5 1 L9 5 Z" fill="#fff"/></svg>
<svg class="a" style="left:1409px;top:10px" width="18" height="18"><path d="M2 1 V17" stroke="#fff" stroke-width="1.6"/><path d="M3 2 H9 L10 4 H15 V10 H10 L9 8 H3 Z" fill="#fff"/></svg>
<svg class="a" style="left:1434px;top:10px" width="16" height="18"><rect x="1" y="3" width="9" height="13" fill="none" stroke="#fff" stroke-width="1.6"/><path d="M7 6 H15 M9 3 V7 M13 3 V7 M11 10 V17" stroke="#fff" stroke-width="1.6"/><rect x="7" y="6" width="8" height="5" fill="#fff"/></svg>
<svg class="a" style="left:1458px;top:12px" width="16" height="14"><rect x="1" y="11" width="2" height="2" fill="#fff"/><rect x="4" y="9" width="2" height="4" fill="#fff"/><rect x="7" y="7" width="2" height="6" fill="#fff"/><rect x="10" y="4" width="2" height="9" fill="#fff"/><rect x="13" y="2" width="2" height="11" fill="#777"/></svg>
<svg class="a" style="left:1482px;top:9px" width="16" height="18"><path d="M1 6 H4 L9 2 V16 L4 12 H1 Z" fill="#fff"/><path d="M11 6 Q13 9 11 12 M13 4 Q16 9 13 14" stroke="#fff" stroke-width="1.2" fill="none"/></svg>
<span class="tray" style="left:1531px;top:5px;font-size:11.8px">20:23</span>
<span class="tray" style="left:1516px;top:22px;font-size:11.3px">2020-01-11</span>
<div class="a" style="left:1586px;top:1px;width:13px;height:38px;border:1px solid #5a6070;background:linear-gradient(90deg,#2a3040,#3a4252)"></div>
</div>
</body></html>
